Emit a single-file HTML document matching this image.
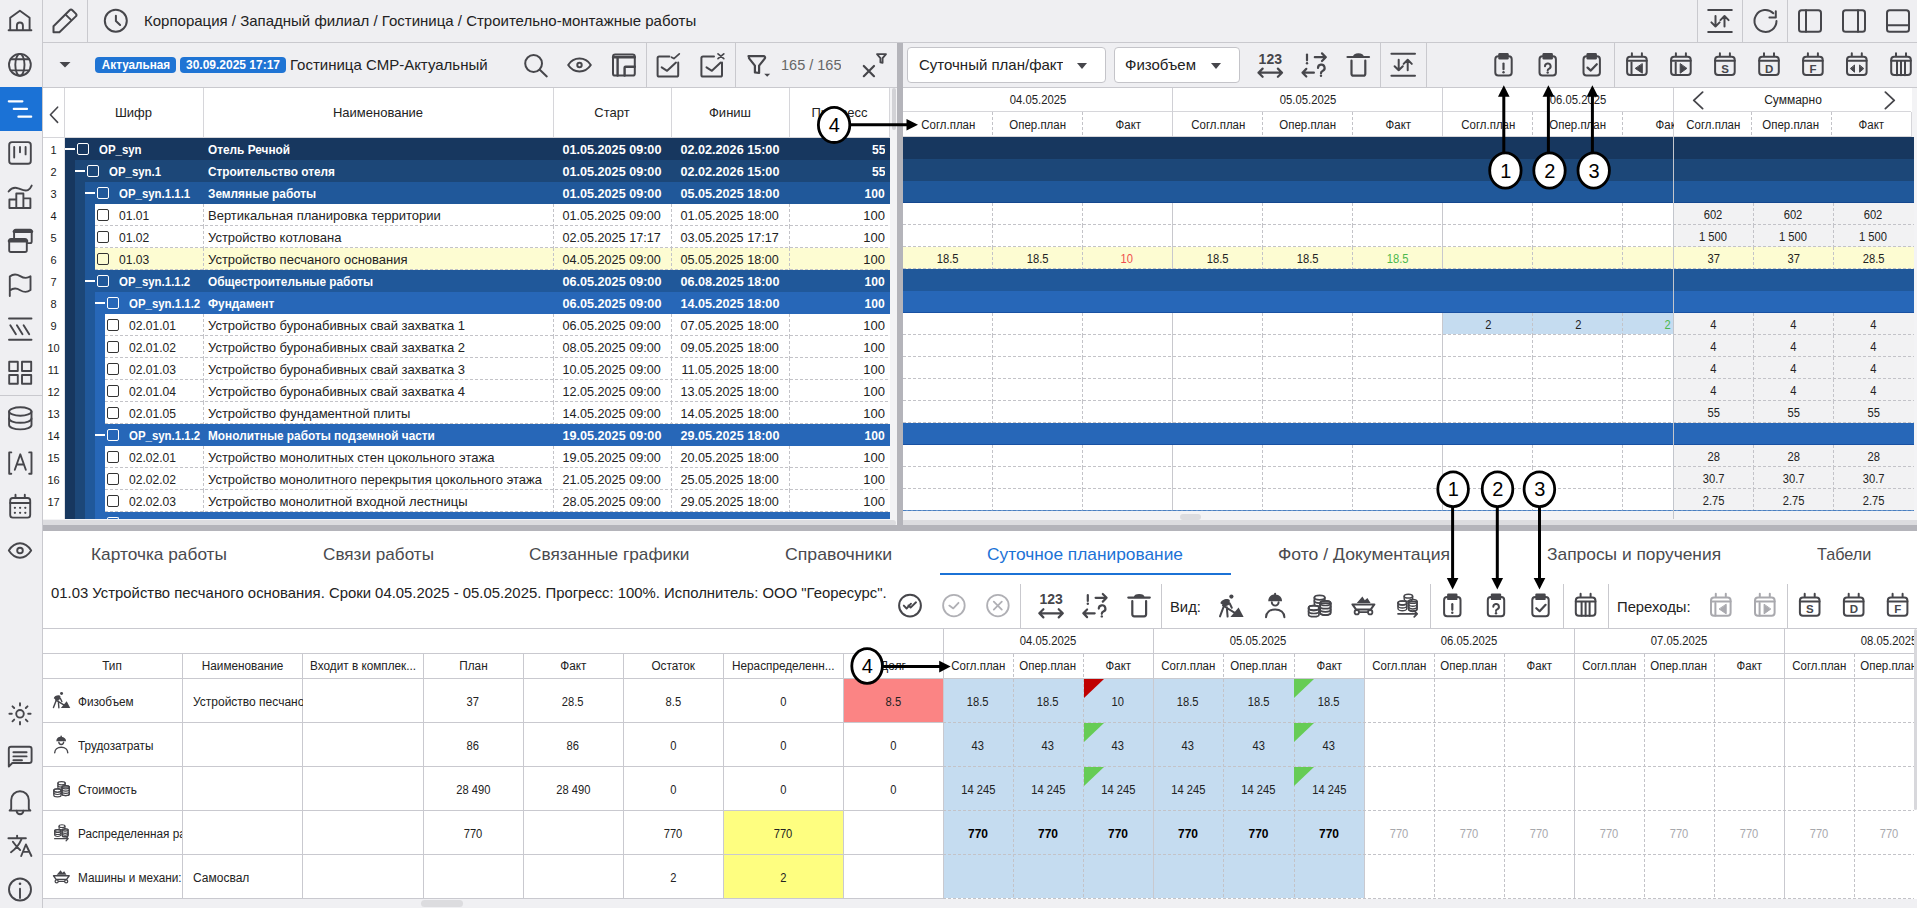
<!DOCTYPE html><html><head><meta charset="utf-8"><style>
html,body{margin:0;padding:0;}
body{width:1917px;height:908px;position:relative;overflow:hidden;background:#fff;font-family:"Liberation Sans",sans-serif;}
body>div, body>svg{position:absolute;}
.t{position:absolute;white-space:nowrap;overflow:hidden;}
</style></head><body>
<div style="left:0px;top:0px;width:42px;height:908px;background:#efeff2"></div>
<div style="left:42px;top:0px;width:1px;height:908px;background:#c9c9ce"></div>
<div style="left:0px;top:87px;width:42px;height:44px;background:#1b72d6"></div>
<div style="left:0px;top:395px;width:42px;height:1px;background:#c9c9ce"></div>
<svg style="position:absolute;left:0px;top:0px" width="42" height="908" viewBox="0 0 42 908" fill="none" stroke="#46464b" stroke-width="1.9" stroke-linecap="round" stroke-linejoin="round"><path d="M8.6 30.3H31.4M10.2 30.3V17.8L19.9 10.8 29.6 17.8V30.3M16.9 30.3v-4.8a3 3 0 0 1 6 0v4.8"/><circle cx="19.9" cy="64.8" r="10.9"/><ellipse cx="19.9" cy="64.8" rx="4.6" ry="10.9"/><path d="M10.6 59.2h18.6M10.6 70.4h18.6"/><rect x="9.2" y="142.1" width="21.6" height="21.6" rx="2.8"/><path d="M14.2 147v10.5M20 147v5.3M25.6 147v7.4"/><path d="M8.6 191.5c2.5-3.2 5.8-4.5 9.5-3.2s6.5 3.2 9.8 1.8c1.6-.7 2.8-2.2 3.8-4.5"/><path d="M9.4 208V199.5h6.9V208M16.3 208V193.5h7.1V208M23.4 208V198.4h7V208H9.4"/><path d="M14.1 237.8V231.2a1.6 1.6 0 0 1 1.6-1.6h14.4a1.6 1.6 0 0 1 1.6 1.6v10.3a1.6 1.6 0 0 1-1.6 1.6h-3.2"/><path d="M14.1 231.6h17.6" stroke-width="3"/><rect x="9.2" y="239" width="17.6" height="13" rx="1.8"/><path d="M9.2 241h17.6" stroke-width="3"/><path d="M9.8 296V276.5c3.2-2.6 6.8-2.6 10.4-.4s7.2 2.4 10.3.2V290c-3.1 2.4-6.7 2.4-10.3.2s-7.2-2.2-10.4.4"/><path d="M9 318.5h22.5M9 339.8h22.5M10.3 325.3l5.6 9M16.9 325.3l5.6 9M23.6 325.3l5.6 9"/><rect x="9.2" y="361.8" width="8.6" height="9.2"/><rect x="22" y="361.8" width="9.2" height="9.2"/><rect x="9.2" y="375" width="8.6" height="8.8"/><rect x="22" y="375" width="9.2" height="8.8"/><ellipse cx="20.3" cy="411.5" rx="11.2" ry="4.2"/><path d="M9.1 411.5v13.6c0 2.4 5 4.3 11.2 4.3s11.2-1.9 11.2-4.3V411.5"/><path d="M9.1 418.5c0 2.4 5 4.3 11.2 4.3s11.2-1.9 11.2-4.3"/><path d="M11.3 452.4H9.2v21.3h2.1M29.2 452.4h2.3v21.3h-2.3"/><path d="M14.8 469.8l5.5-15.5 5.5 15.5M16.8 464.5h7"/><rect x="10.2" y="498" width="20" height="19.6" rx="2.6"/><path d="M10.2 503h20M15.5 494.8v3.2M24.8 494.8v3.2"/><path d="M14.9 507.8h.01M20.1 507.8h.01M25.3 507.8h.01M14.9 512.8h.01M20.1 512.8h.01M25.3 512.8h.01" stroke-width="2.3"/><path d="M8.8 550.5c3-4.6 6.8-7.2 11.2-7.2s8.2 2.6 11.2 7.2c-3 4.6-6.8 7.2-11.2 7.2s-8.2-2.6-11.2-7.2z"/><circle cx="20" cy="550.5" r="2.8"/><circle cx="20" cy="713.8" r="3.8"/><path d="M20 703.2v2.4M20 722v2.4M9.4 713.8h2.4M28.2 713.8h2.4M12.5 706.3l1.7 1.7M25.8 719.6l1.7 1.7M12.5 721.3l1.7-1.7M25.8 708l1.7-1.7"/><path d="M8.8 764.5V749a2.2 2.2 0 0 1 2.2-2.2h18.4a2.2 2.2 0 0 1 2.2 2.2v11.8a2.2 2.2 0 0 1-2.2 2.2H12.3l-3.5 3.6z"/><path d="M13.4 752.3h13.2M13.4 756.4h13.2M13.4 760.3h8.6"/><path d="M11.2 808.8V800a8.8 8.8 0 0 1 17.6 0v8.8l1.6 1.8H9.6z"/><path d="M16.6 810.8a3.4 3.4 0 0 0 6.8 0"/><path d="M8.4 838.2h17.5M17.1 835.6v2.6M21.4 839.4c-2.2 5-5.4 9.4-10.4 12.8M12.9 841.7c2.4 3.4 4.6 6 7.2 8.3"/><path d="M21.2 856l4.7-11.5 5.5 11.5M23.2 851.9h6"/><circle cx="20" cy="889.5" r="11"/><path d="M20 888.8v9.2"/><path d="M20 883.8h.01" stroke-width="2.6"/></svg>
<svg style="position:absolute;left:0px;top:0px" width="42" height="908" viewBox="0 0 42 908" fill="none" stroke="#ffffff" stroke-width="2.2" stroke-linecap="round" stroke-linejoin="round"><path d="M8.8 101.3h13.6M13.8 108.9h13.2M18.4 116.7h12.8"/></svg>
<div style="left:43px;top:0px;width:1874px;height:42px;background:#efeff2"></div>
<div style="left:43px;top:42px;width:1874px;height:1px;background:#c9c9ce"></div>
<div style="left:87px;top:0px;width:1px;height:42px;background:#c9c9ce"></div>
<div class="t" style="left:144px;top:11px;height:20px;line-height:20px;font-size:15px;color:#222">Корпорация / Западный филиал / Гостиница / Строительно-монтажные работы</div>
<div style="left:1697px;top:0px;width:1px;height:42px;background:#c9c9ce"></div>
<div style="left:1742px;top:0px;width:1px;height:42px;background:#c9c9ce"></div>
<div style="left:1787px;top:0px;width:1px;height:42px;background:#c9c9ce"></div>
<div style="left:43px;top:43px;width:1874px;height:44px;background:#efeff2"></div>
<div style="left:43px;top:87px;width:1874px;height:1px;background:#c9c9ce"></div>
<div class="t" style="left:95px;top:57px;width:81px;height:16px;line-height:16px;text-align:center;background:#1f74d4;color:#fff;font-size:12px;font-weight:bold;border-radius:4px;text-align:center"><span style="display:inline-block;transform:scaleX(0.976);transform-origin:center">Актуальная</span></div>
<div class="t" style="left:180px;top:57px;width:106px;height:16px;line-height:16px;text-align:center;background:#1f74d4;color:#fff;font-size:12px;font-weight:bold;border-radius:4px;text-align:center">30.09.2025 17:17</div>
<div class="t" style="left:290px;top:55px;height:20px;line-height:20px;font-size:15px;color:#222">Гостиница СМР-Актуальный</div>
<div style="left:646px;top:43px;width:1px;height:44px;background:#c9c9ce"></div>
<div style="left:735px;top:43px;width:1px;height:44px;background:#c9c9ce"></div>
<div class="t" style="left:781px;top:55px;height:20px;line-height:20px;font-size:14.5px;color:#666">165 / 165</div>
<div style="left:897px;top:43px;width:6px;height:482px;background:#b4b4ba"></div>
<div class="t" style="left:907px;top:47px;width:199px;height:36px;line-height:36px;background:#fff;border:1px solid #c4c4c9;border-radius:4px;box-sizing:border-box"></div>
<div class="t" style="left:919px;top:55px;height:20px;line-height:20px;font-size:15px;color:#222">Суточный план/факт</div>
<div class="t" style="left:1114px;top:47px;width:126px;height:36px;line-height:36px;background:#fff;border:1px solid #c4c4c9;border-radius:4px;box-sizing:border-box"></div>
<div class="t" style="left:1125px;top:55px;height:20px;line-height:20px;font-size:15px;color:#222">Физобъем</div>
<div style="left:1380px;top:43px;width:1px;height:44px;background:#c9c9ce"></div>
<div style="left:1426px;top:43px;width:1px;height:44px;background:#c9c9ce"></div>
<div style="left:1614px;top:43px;width:1px;height:44px;background:#c9c9ce"></div>
<svg style="position:absolute;left:1076.5px;top:62.5px" width="10" height="6" viewBox="0 0 10 6"><path d="M0 0h10L5 6z" fill="#46464b"/></svg>
<svg style="position:absolute;left:1211px;top:62.5px" width="10" height="6" viewBox="0 0 10 6"><path d="M0 0h10L5 6z" fill="#46464b"/></svg>
<svg style="position:absolute;left:0;top:0" width="1917" height="88" viewBox="0 0 1917 88" fill="none" stroke="#46464b" stroke-width="2" stroke-linecap="round" stroke-linejoin="round"><path d="M53.5 32.2V26.3L69.6 10.2a2 2 0 0 1 2.8 0l3.4 3.4a2 2 0 0 1 0 2.8L59.4 32.2z"/><path d="M65.6 14.6l5.2 5"/><circle cx="115.8" cy="20.7" r="11"/><path d="M115.9 15.8V21l4.2 4"/><path d="M1708.2 10h23.6M1708.2 32h23.6"/><path d="M1715.5 16v10.5M1711.4 22.4l4.1 4.1 4.1-4.1M1724.5 26.5V16M1720.4 20.1l4.1-4.1 4.1 4.1"/><path d="M1776.5 21a11 11 0 1 1-3.2-7.8"/><path d="M1775.8 11.2v6.4h-6.4"/><rect x="1799" y="10.3" width="22" height="21.5" rx="2.6"/><path d="M1806 10.3v21.5"/><rect x="1843" y="10.3" width="22" height="21.5" rx="2.6"/><path d="M1858 10.3v21.5"/><rect x="1887" y="10.3" width="22" height="21.5" rx="2.6"/><path d="M1887 25.3h22"/><path d="M59.5 62h11l-5.5 5.5z" fill="#46464b" stroke="none"/><circle cx="533.6" cy="63.5" r="8.4"/><path d="M539.8 69.8l7 6.6"/><path d="M568.2 65c2.8-4.3 6.6-6.4 11.3-6.4s8.5 2.1 11.3 6.4c-2.8 4.3-6.6 6.4-11.3 6.4s-8.5-2.1-11.3-6.4z"/><circle cx="579.5" cy="65" r="2.2"/><rect x="613" y="54.6" width="21.8" height="21" rx="2.2"/><path d="M613 57.2h21.8M617.6 57.2v18.4" stroke-width="2.4"/><path d="M624.6 75.6v-7.8a1 1 0 0 1 1-1h9.2" stroke-width="2.4"/><path d="M678.2 62.5v12.4a1.6 1.6 0 0 1-1.6 1.6h-17.4a1.6 1.6 0 0 1-1.6-1.6V58.1a1.6 1.6 0 0 1 1.6-1.6h10.2"/><path d="M661.7 67.4l5.4 3.4 8.9-8.2"/><path d="M671.5 57.2l2.4 1.4 5.4-4.8" stroke-width="1.7"/><path d="M722 62.5v12.4a1.6 1.6 0 0 1-1.6 1.6h-17.4a1.6 1.6 0 0 1-1.6-1.6V58.1a1.6 1.6 0 0 1 1.6-1.6h11"/><path d="M706.5 67.4l5.4 3.4 8.8-8.2"/><path d="M718 53.8l5.8 4.8M723.8 53.8l-5.8 4.8" stroke-width="1.7"/><path d="M748.5 56.2h15c1.4 0 2 1.4 1.2 2.4l-5.6 7v7.4l-4.2 -0.6v-6.8l-5.6-7c-.8-1 -.2-2.4 1.2-2.4z" stroke-width="2.2"/><path d="M764.2 73.8h6l-3 3z" fill="#46464b" stroke="none"/><path d="M863.8 66l10.2 10.2M874 66l-10.2 10.2" stroke-width="2.2"/><path d="M877 54.2h9l-3.4 4v4.6l-2.2-.4v-4.2z" stroke-width="1.8"/><text x="1270.3" y="63.8" text-anchor="middle" font-family="Liberation Sans" font-weight="bold" font-size="14" fill="#46464b" stroke="none">123</text><path d="M1258.5 72.7h23.5M1262.6 68.6l-4.1 4.1 4.1 4.1M1277.9 68.6l4.1 4.1-4.1 4.1" stroke-width="2.2"/><path d="M1307 54.5v5.8" stroke-width="2.2"/><path d="M1307 63.2h.01" stroke-width="2.4"/><path d="M1314.8 57.2h11M1322 53.4l3.8 3.8-3.8 3.8M1302.5 72.7h11.4M1306.3 68.9l-3.8 3.8 3.8 3.8" stroke-width="2.2"/><path d="M1318 68a3.3 3.3 0 1 1 4.6 3c-1 .5-1.6 1-1.6 2.2" stroke-width="2.2"/><path d="M1321 75.8h.01" stroke-width="2.4"/><path d="M1347.5 57h21.5" stroke-width="2.2"/><path d="M1353 57c0-2.6 2.2-3.7 5.4-3.7s5.4 1.1 5.4 3.7z" fill="#46464b" stroke="none"/><path d="M1351.5 60.5v13.2a2 2 0 0 0 2 2h9.8a2 2 0 0 0 2-2V60.5" stroke-width="2.2"/><path d="M1391.4 53.8h23.6M1391.4 75.8h23.6"/><path d="M1398.7 59.8v10.5M1394.6000000000001 66.2l4.1 4.1 4.1-4.1M1407.7 70.3V59.8M1403.6000000000001 63.9l4.1-4.1 4.1 4.1"/><rect x="1495.3" y="56.3" width="16.4" height="19.3" rx="3"/><rect x="1498.3" y="53" width="10.4" height="6.5" rx="1.2" fill="#46464b" stroke="none"/><path d="M1503.5 63.6v5.6" stroke-width="2.2"/><path d="M1503.5 72.2h.01" stroke-width="2.4"/><rect x="1539.5" y="56.3" width="16.4" height="19.3" rx="3"/><rect x="1542.5" y="53" width="10.4" height="6.5" rx="1.2" fill="#46464b" stroke="none"/><path d="M1545 66.2a2.8 2.8 0 1 1 3.9 2.6c-.8.4-1.2.9-1.2 1.7" stroke-width="2"/><path d="M1547.7 72.6h.01" stroke-width="2.4"/><rect x="1583.5" y="56.3" width="16.4" height="19.3" rx="3"/><rect x="1586.5" y="53" width="10.4" height="6.5" rx="1.2" fill="#46464b" stroke="none"/><path d="M1587.5 67.6l3.3 3 6-6.4" stroke-width="2.2"/><rect x="1627.1000000000001" y="56.8" width="19.6" height="18.299999999999997" rx="3"/><path d="M1627.1000000000001 60.8h19.6M1631.9 53.199999999999996v2.6M1641.9 53.199999999999996v2.6"/><path d="M1631.5 62.4v12.4"/><path d="M1642.3000000000002 64.0v9.2l-6.8-4.6z" fill="#46464b" stroke-width="1"/><rect x="1671.1000000000001" y="56.8" width="19.6" height="18.299999999999997" rx="3"/><path d="M1671.1000000000001 60.8h19.6M1675.9 53.199999999999996v2.6M1685.9 53.199999999999996v2.6"/><path d="M1675.7 62.4v12.4"/><path d="M1680.2 64.0v9.2l6.4-4.6z" fill="#46464b" stroke-width="1"/><rect x="1715.1000000000001" y="56.8" width="19.6" height="18.299999999999997" rx="3"/><path d="M1715.1000000000001 60.8h19.6M1719.9 53.199999999999996v2.6M1729.9 53.199999999999996v2.6"/><text x="1725.1000000000001" y="72.8" text-anchor="middle" font-family="Liberation Sans" font-weight="bold" font-size="11.5" fill="#46464b" stroke="none">S</text><rect x="1759.2" y="56.8" width="19.6" height="18.299999999999997" rx="3"/><path d="M1759.2 60.8h19.6M1764 53.199999999999996v2.6M1774 53.199999999999996v2.6"/><text x="1769.2" y="72.8" text-anchor="middle" font-family="Liberation Sans" font-weight="bold" font-size="11.5" fill="#46464b" stroke="none">D</text><rect x="1803.1000000000001" y="56.8" width="19.6" height="18.299999999999997" rx="3"/><path d="M1803.1000000000001 60.8h19.6M1807.9 53.199999999999996v2.6M1817.9 53.199999999999996v2.6"/><text x="1813.1000000000001" y="72.8" text-anchor="middle" font-family="Liberation Sans" font-weight="bold" font-size="11.5" fill="#46464b" stroke="none">F</text><rect x="1847.0" y="56.8" width="19.6" height="18.299999999999997" rx="3"/><path d="M1847.0 60.8h19.6M1851.8 53.199999999999996v2.6M1861.8 53.199999999999996v2.6"/><path d="M1854.5 65.39999999999999v6.8l-3.9-3.4z" fill="#46464b" stroke-width="1"/><path d="M1859.6 65.39999999999999v6.8l3.9-3.4z" fill="#46464b" stroke-width="1"/><rect x="1891.2" y="56.8" width="19.6" height="18.299999999999997" rx="3"/><path d="M1891.2 60.8h19.6M1896 53.199999999999996v2.6M1906 53.199999999999996v2.6"/><path d="M1897 61.4v13.8M1901 61.4v13.8M1905 61.4v13.8"/></svg>
<div style="left:43px;top:88px;width:854px;height:431px;background:#fff"></div>
<svg style="position:absolute;left:43px;top:100px" width="20" height="28" viewBox="43 100 20 28" fill="none" stroke="#46464b" stroke-width="1.6" stroke-linecap="round" stroke-linejoin="round"><path d="M57.6 107.2l-7.2 7.6 7.2 7.6"/></svg>
<div style="left:64px;top:88px;width:1px;height:50px;background:#d6d6da"></div>
<div style="left:203px;top:88px;width:1px;height:50px;background:#d6d6da"></div>
<div style="left:553px;top:88px;width:1px;height:50px;background:#d6d6da"></div>
<div style="left:671px;top:88px;width:1px;height:50px;background:#d6d6da"></div>
<div style="left:789px;top:88px;width:1px;height:50px;background:#d6d6da"></div>
<div style="left:889px;top:88px;width:1px;height:50px;background:#d6d6da"></div>
<div style="left:43px;top:137px;width:847px;height:1px;background:#d6d6da"></div>
<div class="t" style="left:63.5px;top:105px;width:140px;height:16px;line-height:16px;text-align:center;font-size:13px;color:#222">Шифр</div>
<div class="t" style="left:308px;top:105px;width:140px;height:16px;line-height:16px;text-align:center;font-size:13px;color:#222">Наименование</div>
<div class="t" style="left:542px;top:105px;width:140px;height:16px;line-height:16px;text-align:center;font-size:13px;color:#222">Старт</div>
<div class="t" style="left:660px;top:105px;width:140px;height:16px;line-height:16px;text-align:center;font-size:13px;color:#222">Финиш</div>
<div class="t" style="left:769.5px;top:105px;width:140px;height:16px;line-height:16px;text-align:center;font-size:13px;color:#222">Прогресс</div>
<div style="left:890px;top:88px;width:7px;height:431px;background:#f3f3f5"></div>
<div style="left:892px;top:88px;width:4px;height:42px;background:#d2d2d6;border-radius:2px"></div>
<div style="left:903px;top:88px;width:1014px;height:431px;background:#fff"></div>
<div class="t" style="left:42px;top:139px;width:23px;height:22px;line-height:22px;text-align:center;font-size:11px;color:#1a1a1a">1</div>
<div style="left:65px;top:138px;width:825px;height:22px;background:#17375f"></div>
<div style="left:65px;top:148px;width:10px;height:2px;background:#fff"></div>
<div style="left:77px;top:143px;width:12px;height:12px;border:1px solid #fff;border-radius:2px;box-sizing:border-box"></div>
<div class="t" style="left:99px;top:139px;height:22px;line-height:22px;font-size:13px;color:#fff;font-weight:bold"><span style="display:inline-block;transform:scaleX(0.88);transform-origin:left">OP_syn</span></div>
<div class="t" style="left:208px;top:139px;height:22px;line-height:22px;font-size:13px;color:#fff;font-weight:bold"><span style="display:inline-block;transform:scaleX(0.91);transform-origin:left">Отель Речной</span></div>
<div class="t" style="left:553px;top:139px;width:118px;height:22px;line-height:22px;text-align:center;font-size:13px;color:#fff;font-weight:bold"><span style="display:inline-block;transform:scaleX(0.97);transform-origin:center">01.05.2025 09:00</span></div>
<div class="t" style="left:671px;top:139px;width:118px;height:22px;line-height:22px;text-align:center;font-size:13px;color:#fff;font-weight:bold"><span style="display:inline-block;transform:scaleX(0.97);transform-origin:center">02.02.2026 15:00</span></div>
<div class="t" style="left:789px;top:139px;width:96px;height:22px;line-height:22px;text-align:right;font-size:13px;color:#fff;font-weight:bold"><span style="display:inline-block;transform:scaleX(0.93);transform-origin:right">55</span></div>
<div class="t" style="left:42px;top:161px;width:23px;height:22px;line-height:22px;text-align:center;font-size:11px;color:#1a1a1a">2</div>
<div style="left:65px;top:160px;width:10px;height:22px;background:#17375f"></div>
<div style="left:75px;top:160px;width:815px;height:22px;background:#1c4778"></div>
<div style="left:75px;top:170px;width:10px;height:2px;background:#fff"></div>
<div style="left:87px;top:165px;width:12px;height:12px;border:1px solid #fff;border-radius:2px;box-sizing:border-box"></div>
<div class="t" style="left:109px;top:161px;height:22px;line-height:22px;font-size:13px;color:#fff;font-weight:bold"><span style="display:inline-block;transform:scaleX(0.88);transform-origin:left">OP_syn.1</span></div>
<div class="t" style="left:208px;top:161px;height:22px;line-height:22px;font-size:13px;color:#fff;font-weight:bold"><span style="display:inline-block;transform:scaleX(0.91);transform-origin:left">Строительство отеля</span></div>
<div class="t" style="left:553px;top:161px;width:118px;height:22px;line-height:22px;text-align:center;font-size:13px;color:#fff;font-weight:bold"><span style="display:inline-block;transform:scaleX(0.97);transform-origin:center">01.05.2025 09:00</span></div>
<div class="t" style="left:671px;top:161px;width:118px;height:22px;line-height:22px;text-align:center;font-size:13px;color:#fff;font-weight:bold"><span style="display:inline-block;transform:scaleX(0.97);transform-origin:center">02.02.2026 15:00</span></div>
<div class="t" style="left:789px;top:161px;width:96px;height:22px;line-height:22px;text-align:right;font-size:13px;color:#fff;font-weight:bold"><span style="display:inline-block;transform:scaleX(0.93);transform-origin:right">55</span></div>
<div class="t" style="left:42px;top:183px;width:23px;height:22px;line-height:22px;text-align:center;font-size:11px;color:#1a1a1a">3</div>
<div style="left:65px;top:182px;width:10px;height:22px;background:#17375f"></div>
<div style="left:75px;top:182px;width:10px;height:22px;background:#1c4778"></div>
<div style="left:85px;top:182px;width:805px;height:22px;background:#20589a"></div>
<div style="left:85px;top:192px;width:10px;height:2px;background:#fff"></div>
<div style="left:97px;top:187px;width:12px;height:12px;border:1px solid #fff;border-radius:2px;box-sizing:border-box"></div>
<div class="t" style="left:119px;top:183px;height:22px;line-height:22px;font-size:13px;color:#fff;font-weight:bold"><span style="display:inline-block;transform:scaleX(0.88);transform-origin:left">OP_syn.1.1.1</span></div>
<div class="t" style="left:208px;top:183px;height:22px;line-height:22px;font-size:13px;color:#fff;font-weight:bold"><span style="display:inline-block;transform:scaleX(0.91);transform-origin:left">Земляные работы</span></div>
<div class="t" style="left:553px;top:183px;width:118px;height:22px;line-height:22px;text-align:center;font-size:13px;color:#fff;font-weight:bold"><span style="display:inline-block;transform:scaleX(0.97);transform-origin:center">01.05.2025 09:00</span></div>
<div class="t" style="left:671px;top:183px;width:118px;height:22px;line-height:22px;text-align:center;font-size:13px;color:#fff;font-weight:bold"><span style="display:inline-block;transform:scaleX(0.97);transform-origin:center">05.05.2025 18:00</span></div>
<div class="t" style="left:789px;top:183px;width:96px;height:22px;line-height:22px;text-align:right;font-size:13px;color:#fff;font-weight:bold"><span style="display:inline-block;transform:scaleX(0.93);transform-origin:right">100</span></div>
<div class="t" style="left:42px;top:205px;width:23px;height:22px;line-height:22px;text-align:center;font-size:11px;color:#1a1a1a">4</div>
<div style="left:65px;top:204px;width:10px;height:22px;background:#17375f"></div>
<div style="left:75px;top:204px;width:10px;height:22px;background:#1c4778"></div>
<div style="left:85px;top:204px;width:10px;height:22px;background:#20589a"></div>
<div style="left:95px;top:204px;width:795px;height:22px;background:#fff"></div>
<div style="left:97px;top:209px;width:12px;height:12px;border:1px solid #333;border-radius:2px;box-sizing:border-box"></div>
<div class="t" style="left:119px;top:205px;height:22px;line-height:22px;font-size:13px;color:#222"><span style="display:inline-block;transform:scaleX(0.93);transform-origin:left">01.01</span></div>
<div class="t" style="left:208px;top:205px;width:343px;height:22px;line-height:22px;font-size:13px;color:#222">Вертикальная планировка территории</div>
<div class="t" style="left:553px;top:205px;width:118px;height:22px;line-height:22px;text-align:center;font-size:13px;color:#222"><span style="display:inline-block;transform:scaleX(0.97);transform-origin:center">01.05.2025 09:00</span></div>
<div class="t" style="left:671px;top:205px;width:118px;height:22px;line-height:22px;text-align:center;font-size:13px;color:#222"><span style="display:inline-block;transform:scaleX(0.97);transform-origin:center">01.05.2025 18:00</span></div>
<div class="t" style="left:789px;top:205px;width:96px;height:22px;line-height:22px;text-align:right;font-size:13px;color:#222">100</div>
<div style="left:95px;top:225px;width:795px;height:1px;background-image:linear-gradient(to right,#c3c3c8 60%,transparent 60%);background-size:5px 1px"></div>
<div style="left:203px;top:204px;width:1px;height:22px;background-image:linear-gradient(to bottom,#c3c3c8 60%,transparent 60%);background-size:1px 5px"></div>
<div style="left:553px;top:204px;width:1px;height:22px;background-image:linear-gradient(to bottom,#c3c3c8 60%,transparent 60%);background-size:1px 5px"></div>
<div style="left:671px;top:204px;width:1px;height:22px;background-image:linear-gradient(to bottom,#c3c3c8 60%,transparent 60%);background-size:1px 5px"></div>
<div style="left:789px;top:204px;width:1px;height:22px;background-image:linear-gradient(to bottom,#c3c3c8 60%,transparent 60%);background-size:1px 5px"></div>
<div class="t" style="left:42px;top:227px;width:23px;height:22px;line-height:22px;text-align:center;font-size:11px;color:#1a1a1a">5</div>
<div style="left:65px;top:226px;width:10px;height:22px;background:#17375f"></div>
<div style="left:75px;top:226px;width:10px;height:22px;background:#1c4778"></div>
<div style="left:85px;top:226px;width:10px;height:22px;background:#20589a"></div>
<div style="left:95px;top:226px;width:795px;height:22px;background:#fff"></div>
<div style="left:97px;top:231px;width:12px;height:12px;border:1px solid #333;border-radius:2px;box-sizing:border-box"></div>
<div class="t" style="left:119px;top:227px;height:22px;line-height:22px;font-size:13px;color:#222"><span style="display:inline-block;transform:scaleX(0.93);transform-origin:left">01.02</span></div>
<div class="t" style="left:208px;top:227px;width:343px;height:22px;line-height:22px;font-size:13px;color:#222">Устройство котлована</div>
<div class="t" style="left:553px;top:227px;width:118px;height:22px;line-height:22px;text-align:center;font-size:13px;color:#222"><span style="display:inline-block;transform:scaleX(0.97);transform-origin:center">02.05.2025 17:17</span></div>
<div class="t" style="left:671px;top:227px;width:118px;height:22px;line-height:22px;text-align:center;font-size:13px;color:#222"><span style="display:inline-block;transform:scaleX(0.97);transform-origin:center">03.05.2025 17:17</span></div>
<div class="t" style="left:789px;top:227px;width:96px;height:22px;line-height:22px;text-align:right;font-size:13px;color:#222">100</div>
<div style="left:95px;top:247px;width:795px;height:1px;background-image:linear-gradient(to right,#c3c3c8 60%,transparent 60%);background-size:5px 1px"></div>
<div style="left:203px;top:226px;width:1px;height:22px;background-image:linear-gradient(to bottom,#c3c3c8 60%,transparent 60%);background-size:1px 5px"></div>
<div style="left:553px;top:226px;width:1px;height:22px;background-image:linear-gradient(to bottom,#c3c3c8 60%,transparent 60%);background-size:1px 5px"></div>
<div style="left:671px;top:226px;width:1px;height:22px;background-image:linear-gradient(to bottom,#c3c3c8 60%,transparent 60%);background-size:1px 5px"></div>
<div style="left:789px;top:226px;width:1px;height:22px;background-image:linear-gradient(to bottom,#c3c3c8 60%,transparent 60%);background-size:1px 5px"></div>
<div class="t" style="left:42px;top:249px;width:23px;height:22px;line-height:22px;text-align:center;font-size:11px;color:#1a1a1a">6</div>
<div style="left:65px;top:248px;width:10px;height:22px;background:#17375f"></div>
<div style="left:75px;top:248px;width:10px;height:22px;background:#1c4778"></div>
<div style="left:85px;top:248px;width:10px;height:22px;background:#20589a"></div>
<div style="left:95px;top:248px;width:795px;height:22px;background:#fdfcd2"></div>
<div style="left:97px;top:253px;width:12px;height:12px;border:1px solid #333;border-radius:2px;box-sizing:border-box"></div>
<div class="t" style="left:119px;top:249px;height:22px;line-height:22px;font-size:13px;color:#222"><span style="display:inline-block;transform:scaleX(0.93);transform-origin:left">01.03</span></div>
<div class="t" style="left:208px;top:249px;width:343px;height:22px;line-height:22px;font-size:13px;color:#222">Устройство песчаного основания</div>
<div class="t" style="left:553px;top:249px;width:118px;height:22px;line-height:22px;text-align:center;font-size:13px;color:#222"><span style="display:inline-block;transform:scaleX(0.97);transform-origin:center">04.05.2025 09:00</span></div>
<div class="t" style="left:671px;top:249px;width:118px;height:22px;line-height:22px;text-align:center;font-size:13px;color:#222"><span style="display:inline-block;transform:scaleX(0.97);transform-origin:center">05.05.2025 18:00</span></div>
<div class="t" style="left:789px;top:249px;width:96px;height:22px;line-height:22px;text-align:right;font-size:13px;color:#222">100</div>
<div style="left:95px;top:269px;width:795px;height:1px;background-image:linear-gradient(to right,#c3c3c8 60%,transparent 60%);background-size:5px 1px"></div>
<div style="left:203px;top:248px;width:1px;height:22px;background-image:linear-gradient(to bottom,#c3c3c8 60%,transparent 60%);background-size:1px 5px"></div>
<div style="left:553px;top:248px;width:1px;height:22px;background-image:linear-gradient(to bottom,#c3c3c8 60%,transparent 60%);background-size:1px 5px"></div>
<div style="left:671px;top:248px;width:1px;height:22px;background-image:linear-gradient(to bottom,#c3c3c8 60%,transparent 60%);background-size:1px 5px"></div>
<div style="left:789px;top:248px;width:1px;height:22px;background-image:linear-gradient(to bottom,#c3c3c8 60%,transparent 60%);background-size:1px 5px"></div>
<div class="t" style="left:42px;top:271px;width:23px;height:22px;line-height:22px;text-align:center;font-size:11px;color:#1a1a1a">7</div>
<div style="left:65px;top:270px;width:10px;height:22px;background:#17375f"></div>
<div style="left:75px;top:270px;width:10px;height:22px;background:#1c4778"></div>
<div style="left:85px;top:270px;width:805px;height:22px;background:#20589a"></div>
<div style="left:85px;top:280px;width:10px;height:2px;background:#fff"></div>
<div style="left:97px;top:275px;width:12px;height:12px;border:1px solid #fff;border-radius:2px;box-sizing:border-box"></div>
<div class="t" style="left:119px;top:271px;height:22px;line-height:22px;font-size:13px;color:#fff;font-weight:bold"><span style="display:inline-block;transform:scaleX(0.88);transform-origin:left">OP_syn.1.1.2</span></div>
<div class="t" style="left:208px;top:271px;height:22px;line-height:22px;font-size:13px;color:#fff;font-weight:bold"><span style="display:inline-block;transform:scaleX(0.91);transform-origin:left">Общестроительные работы</span></div>
<div class="t" style="left:553px;top:271px;width:118px;height:22px;line-height:22px;text-align:center;font-size:13px;color:#fff;font-weight:bold"><span style="display:inline-block;transform:scaleX(0.97);transform-origin:center">06.05.2025 09:00</span></div>
<div class="t" style="left:671px;top:271px;width:118px;height:22px;line-height:22px;text-align:center;font-size:13px;color:#fff;font-weight:bold"><span style="display:inline-block;transform:scaleX(0.97);transform-origin:center">06.08.2025 18:00</span></div>
<div class="t" style="left:789px;top:271px;width:96px;height:22px;line-height:22px;text-align:right;font-size:13px;color:#fff;font-weight:bold"><span style="display:inline-block;transform:scaleX(0.93);transform-origin:right">100</span></div>
<div class="t" style="left:42px;top:293px;width:23px;height:22px;line-height:22px;text-align:center;font-size:11px;color:#1a1a1a">8</div>
<div style="left:65px;top:292px;width:10px;height:22px;background:#17375f"></div>
<div style="left:75px;top:292px;width:10px;height:22px;background:#1c4778"></div>
<div style="left:85px;top:292px;width:10px;height:22px;background:#20589a"></div>
<div style="left:95px;top:292px;width:795px;height:22px;background:#2767b8"></div>
<div style="left:95px;top:302px;width:10px;height:2px;background:#fff"></div>
<div style="left:107px;top:297px;width:12px;height:12px;border:1px solid #fff;border-radius:2px;box-sizing:border-box"></div>
<div class="t" style="left:129px;top:293px;height:22px;line-height:22px;font-size:13px;color:#fff;font-weight:bold"><span style="display:inline-block;transform:scaleX(0.88);transform-origin:left">OP_syn.1.1.2</span></div>
<div class="t" style="left:208px;top:293px;height:22px;line-height:22px;font-size:13px;color:#fff;font-weight:bold"><span style="display:inline-block;transform:scaleX(0.91);transform-origin:left">Фундамент</span></div>
<div class="t" style="left:553px;top:293px;width:118px;height:22px;line-height:22px;text-align:center;font-size:13px;color:#fff;font-weight:bold"><span style="display:inline-block;transform:scaleX(0.97);transform-origin:center">06.05.2025 09:00</span></div>
<div class="t" style="left:671px;top:293px;width:118px;height:22px;line-height:22px;text-align:center;font-size:13px;color:#fff;font-weight:bold"><span style="display:inline-block;transform:scaleX(0.97);transform-origin:center">14.05.2025 18:00</span></div>
<div class="t" style="left:789px;top:293px;width:96px;height:22px;line-height:22px;text-align:right;font-size:13px;color:#fff;font-weight:bold"><span style="display:inline-block;transform:scaleX(0.93);transform-origin:right">100</span></div>
<div class="t" style="left:42px;top:315px;width:23px;height:22px;line-height:22px;text-align:center;font-size:11px;color:#1a1a1a">9</div>
<div style="left:65px;top:314px;width:10px;height:22px;background:#17375f"></div>
<div style="left:75px;top:314px;width:10px;height:22px;background:#1c4778"></div>
<div style="left:85px;top:314px;width:10px;height:22px;background:#20589a"></div>
<div style="left:95px;top:314px;width:10px;height:22px;background:#2767b8"></div>
<div style="left:105px;top:314px;width:785px;height:22px;background:#fff"></div>
<div style="left:107px;top:319px;width:12px;height:12px;border:1px solid #333;border-radius:2px;box-sizing:border-box"></div>
<div class="t" style="left:129px;top:315px;height:22px;line-height:22px;font-size:13px;color:#222"><span style="display:inline-block;transform:scaleX(0.93);transform-origin:left">02.01.01</span></div>
<div class="t" style="left:208px;top:315px;width:343px;height:22px;line-height:22px;font-size:13px;color:#222">Устройство буронабивных свай захватка 1</div>
<div class="t" style="left:553px;top:315px;width:118px;height:22px;line-height:22px;text-align:center;font-size:13px;color:#222"><span style="display:inline-block;transform:scaleX(0.97);transform-origin:center">06.05.2025 09:00</span></div>
<div class="t" style="left:671px;top:315px;width:118px;height:22px;line-height:22px;text-align:center;font-size:13px;color:#222"><span style="display:inline-block;transform:scaleX(0.97);transform-origin:center">07.05.2025 18:00</span></div>
<div class="t" style="left:789px;top:315px;width:96px;height:22px;line-height:22px;text-align:right;font-size:13px;color:#222">100</div>
<div style="left:105px;top:335px;width:785px;height:1px;background-image:linear-gradient(to right,#c3c3c8 60%,transparent 60%);background-size:5px 1px"></div>
<div style="left:203px;top:314px;width:1px;height:22px;background-image:linear-gradient(to bottom,#c3c3c8 60%,transparent 60%);background-size:1px 5px"></div>
<div style="left:553px;top:314px;width:1px;height:22px;background-image:linear-gradient(to bottom,#c3c3c8 60%,transparent 60%);background-size:1px 5px"></div>
<div style="left:671px;top:314px;width:1px;height:22px;background-image:linear-gradient(to bottom,#c3c3c8 60%,transparent 60%);background-size:1px 5px"></div>
<div style="left:789px;top:314px;width:1px;height:22px;background-image:linear-gradient(to bottom,#c3c3c8 60%,transparent 60%);background-size:1px 5px"></div>
<div class="t" style="left:42px;top:337px;width:23px;height:22px;line-height:22px;text-align:center;font-size:11px;color:#1a1a1a">10</div>
<div style="left:65px;top:336px;width:10px;height:22px;background:#17375f"></div>
<div style="left:75px;top:336px;width:10px;height:22px;background:#1c4778"></div>
<div style="left:85px;top:336px;width:10px;height:22px;background:#20589a"></div>
<div style="left:95px;top:336px;width:10px;height:22px;background:#2767b8"></div>
<div style="left:105px;top:336px;width:785px;height:22px;background:#fff"></div>
<div style="left:107px;top:341px;width:12px;height:12px;border:1px solid #333;border-radius:2px;box-sizing:border-box"></div>
<div class="t" style="left:129px;top:337px;height:22px;line-height:22px;font-size:13px;color:#222"><span style="display:inline-block;transform:scaleX(0.93);transform-origin:left">02.01.02</span></div>
<div class="t" style="left:208px;top:337px;width:343px;height:22px;line-height:22px;font-size:13px;color:#222">Устройство буронабивных свай захватка 2</div>
<div class="t" style="left:553px;top:337px;width:118px;height:22px;line-height:22px;text-align:center;font-size:13px;color:#222"><span style="display:inline-block;transform:scaleX(0.97);transform-origin:center">08.05.2025 09:00</span></div>
<div class="t" style="left:671px;top:337px;width:118px;height:22px;line-height:22px;text-align:center;font-size:13px;color:#222"><span style="display:inline-block;transform:scaleX(0.97);transform-origin:center">09.05.2025 18:00</span></div>
<div class="t" style="left:789px;top:337px;width:96px;height:22px;line-height:22px;text-align:right;font-size:13px;color:#222">100</div>
<div style="left:105px;top:357px;width:785px;height:1px;background-image:linear-gradient(to right,#c3c3c8 60%,transparent 60%);background-size:5px 1px"></div>
<div style="left:203px;top:336px;width:1px;height:22px;background-image:linear-gradient(to bottom,#c3c3c8 60%,transparent 60%);background-size:1px 5px"></div>
<div style="left:553px;top:336px;width:1px;height:22px;background-image:linear-gradient(to bottom,#c3c3c8 60%,transparent 60%);background-size:1px 5px"></div>
<div style="left:671px;top:336px;width:1px;height:22px;background-image:linear-gradient(to bottom,#c3c3c8 60%,transparent 60%);background-size:1px 5px"></div>
<div style="left:789px;top:336px;width:1px;height:22px;background-image:linear-gradient(to bottom,#c3c3c8 60%,transparent 60%);background-size:1px 5px"></div>
<div class="t" style="left:42px;top:359px;width:23px;height:22px;line-height:22px;text-align:center;font-size:11px;color:#1a1a1a">11</div>
<div style="left:65px;top:358px;width:10px;height:22px;background:#17375f"></div>
<div style="left:75px;top:358px;width:10px;height:22px;background:#1c4778"></div>
<div style="left:85px;top:358px;width:10px;height:22px;background:#20589a"></div>
<div style="left:95px;top:358px;width:10px;height:22px;background:#2767b8"></div>
<div style="left:105px;top:358px;width:785px;height:22px;background:#fff"></div>
<div style="left:107px;top:363px;width:12px;height:12px;border:1px solid #333;border-radius:2px;box-sizing:border-box"></div>
<div class="t" style="left:129px;top:359px;height:22px;line-height:22px;font-size:13px;color:#222"><span style="display:inline-block;transform:scaleX(0.93);transform-origin:left">02.01.03</span></div>
<div class="t" style="left:208px;top:359px;width:343px;height:22px;line-height:22px;font-size:13px;color:#222">Устройство буронабивных свай захватка 3</div>
<div class="t" style="left:553px;top:359px;width:118px;height:22px;line-height:22px;text-align:center;font-size:13px;color:#222"><span style="display:inline-block;transform:scaleX(0.97);transform-origin:center">10.05.2025 09:00</span></div>
<div class="t" style="left:671px;top:359px;width:118px;height:22px;line-height:22px;text-align:center;font-size:13px;color:#222"><span style="display:inline-block;transform:scaleX(0.97);transform-origin:center">11.05.2025 18:00</span></div>
<div class="t" style="left:789px;top:359px;width:96px;height:22px;line-height:22px;text-align:right;font-size:13px;color:#222">100</div>
<div style="left:105px;top:379px;width:785px;height:1px;background-image:linear-gradient(to right,#c3c3c8 60%,transparent 60%);background-size:5px 1px"></div>
<div style="left:203px;top:358px;width:1px;height:22px;background-image:linear-gradient(to bottom,#c3c3c8 60%,transparent 60%);background-size:1px 5px"></div>
<div style="left:553px;top:358px;width:1px;height:22px;background-image:linear-gradient(to bottom,#c3c3c8 60%,transparent 60%);background-size:1px 5px"></div>
<div style="left:671px;top:358px;width:1px;height:22px;background-image:linear-gradient(to bottom,#c3c3c8 60%,transparent 60%);background-size:1px 5px"></div>
<div style="left:789px;top:358px;width:1px;height:22px;background-image:linear-gradient(to bottom,#c3c3c8 60%,transparent 60%);background-size:1px 5px"></div>
<div class="t" style="left:42px;top:381px;width:23px;height:22px;line-height:22px;text-align:center;font-size:11px;color:#1a1a1a">12</div>
<div style="left:65px;top:380px;width:10px;height:22px;background:#17375f"></div>
<div style="left:75px;top:380px;width:10px;height:22px;background:#1c4778"></div>
<div style="left:85px;top:380px;width:10px;height:22px;background:#20589a"></div>
<div style="left:95px;top:380px;width:10px;height:22px;background:#2767b8"></div>
<div style="left:105px;top:380px;width:785px;height:22px;background:#fff"></div>
<div style="left:107px;top:385px;width:12px;height:12px;border:1px solid #333;border-radius:2px;box-sizing:border-box"></div>
<div class="t" style="left:129px;top:381px;height:22px;line-height:22px;font-size:13px;color:#222"><span style="display:inline-block;transform:scaleX(0.93);transform-origin:left">02.01.04</span></div>
<div class="t" style="left:208px;top:381px;width:343px;height:22px;line-height:22px;font-size:13px;color:#222">Устройство буронабивных свай захватка 4</div>
<div class="t" style="left:553px;top:381px;width:118px;height:22px;line-height:22px;text-align:center;font-size:13px;color:#222"><span style="display:inline-block;transform:scaleX(0.97);transform-origin:center">12.05.2025 09:00</span></div>
<div class="t" style="left:671px;top:381px;width:118px;height:22px;line-height:22px;text-align:center;font-size:13px;color:#222"><span style="display:inline-block;transform:scaleX(0.97);transform-origin:center">13.05.2025 18:00</span></div>
<div class="t" style="left:789px;top:381px;width:96px;height:22px;line-height:22px;text-align:right;font-size:13px;color:#222">100</div>
<div style="left:105px;top:401px;width:785px;height:1px;background-image:linear-gradient(to right,#c3c3c8 60%,transparent 60%);background-size:5px 1px"></div>
<div style="left:203px;top:380px;width:1px;height:22px;background-image:linear-gradient(to bottom,#c3c3c8 60%,transparent 60%);background-size:1px 5px"></div>
<div style="left:553px;top:380px;width:1px;height:22px;background-image:linear-gradient(to bottom,#c3c3c8 60%,transparent 60%);background-size:1px 5px"></div>
<div style="left:671px;top:380px;width:1px;height:22px;background-image:linear-gradient(to bottom,#c3c3c8 60%,transparent 60%);background-size:1px 5px"></div>
<div style="left:789px;top:380px;width:1px;height:22px;background-image:linear-gradient(to bottom,#c3c3c8 60%,transparent 60%);background-size:1px 5px"></div>
<div class="t" style="left:42px;top:403px;width:23px;height:22px;line-height:22px;text-align:center;font-size:11px;color:#1a1a1a">13</div>
<div style="left:65px;top:402px;width:10px;height:22px;background:#17375f"></div>
<div style="left:75px;top:402px;width:10px;height:22px;background:#1c4778"></div>
<div style="left:85px;top:402px;width:10px;height:22px;background:#20589a"></div>
<div style="left:95px;top:402px;width:10px;height:22px;background:#2767b8"></div>
<div style="left:105px;top:402px;width:785px;height:22px;background:#fff"></div>
<div style="left:107px;top:407px;width:12px;height:12px;border:1px solid #333;border-radius:2px;box-sizing:border-box"></div>
<div class="t" style="left:129px;top:403px;height:22px;line-height:22px;font-size:13px;color:#222"><span style="display:inline-block;transform:scaleX(0.93);transform-origin:left">02.01.05</span></div>
<div class="t" style="left:208px;top:403px;width:343px;height:22px;line-height:22px;font-size:13px;color:#222">Устройство фундаментной плиты</div>
<div class="t" style="left:553px;top:403px;width:118px;height:22px;line-height:22px;text-align:center;font-size:13px;color:#222"><span style="display:inline-block;transform:scaleX(0.97);transform-origin:center">14.05.2025 09:00</span></div>
<div class="t" style="left:671px;top:403px;width:118px;height:22px;line-height:22px;text-align:center;font-size:13px;color:#222"><span style="display:inline-block;transform:scaleX(0.97);transform-origin:center">14.05.2025 18:00</span></div>
<div class="t" style="left:789px;top:403px;width:96px;height:22px;line-height:22px;text-align:right;font-size:13px;color:#222">100</div>
<div style="left:105px;top:423px;width:785px;height:1px;background-image:linear-gradient(to right,#c3c3c8 60%,transparent 60%);background-size:5px 1px"></div>
<div style="left:203px;top:402px;width:1px;height:22px;background-image:linear-gradient(to bottom,#c3c3c8 60%,transparent 60%);background-size:1px 5px"></div>
<div style="left:553px;top:402px;width:1px;height:22px;background-image:linear-gradient(to bottom,#c3c3c8 60%,transparent 60%);background-size:1px 5px"></div>
<div style="left:671px;top:402px;width:1px;height:22px;background-image:linear-gradient(to bottom,#c3c3c8 60%,transparent 60%);background-size:1px 5px"></div>
<div style="left:789px;top:402px;width:1px;height:22px;background-image:linear-gradient(to bottom,#c3c3c8 60%,transparent 60%);background-size:1px 5px"></div>
<div class="t" style="left:42px;top:425px;width:23px;height:22px;line-height:22px;text-align:center;font-size:11px;color:#1a1a1a">14</div>
<div style="left:65px;top:424px;width:10px;height:22px;background:#17375f"></div>
<div style="left:75px;top:424px;width:10px;height:22px;background:#1c4778"></div>
<div style="left:85px;top:424px;width:10px;height:22px;background:#20589a"></div>
<div style="left:95px;top:424px;width:795px;height:22px;background:#2767b8"></div>
<div style="left:95px;top:434px;width:10px;height:2px;background:#fff"></div>
<div style="left:107px;top:429px;width:12px;height:12px;border:1px solid #fff;border-radius:2px;box-sizing:border-box"></div>
<div class="t" style="left:129px;top:425px;height:22px;line-height:22px;font-size:13px;color:#fff;font-weight:bold"><span style="display:inline-block;transform:scaleX(0.88);transform-origin:left">OP_syn.1.1.2</span></div>
<div class="t" style="left:208px;top:425px;height:22px;line-height:22px;font-size:13px;color:#fff;font-weight:bold"><span style="display:inline-block;transform:scaleX(0.91);transform-origin:left">Монолитные работы подземной части</span></div>
<div class="t" style="left:553px;top:425px;width:118px;height:22px;line-height:22px;text-align:center;font-size:13px;color:#fff;font-weight:bold"><span style="display:inline-block;transform:scaleX(0.97);transform-origin:center">19.05.2025 09:00</span></div>
<div class="t" style="left:671px;top:425px;width:118px;height:22px;line-height:22px;text-align:center;font-size:13px;color:#fff;font-weight:bold"><span style="display:inline-block;transform:scaleX(0.97);transform-origin:center">29.05.2025 18:00</span></div>
<div class="t" style="left:789px;top:425px;width:96px;height:22px;line-height:22px;text-align:right;font-size:13px;color:#fff;font-weight:bold"><span style="display:inline-block;transform:scaleX(0.93);transform-origin:right">100</span></div>
<div class="t" style="left:42px;top:447px;width:23px;height:22px;line-height:22px;text-align:center;font-size:11px;color:#1a1a1a">15</div>
<div style="left:65px;top:446px;width:10px;height:22px;background:#17375f"></div>
<div style="left:75px;top:446px;width:10px;height:22px;background:#1c4778"></div>
<div style="left:85px;top:446px;width:10px;height:22px;background:#20589a"></div>
<div style="left:95px;top:446px;width:10px;height:22px;background:#2767b8"></div>
<div style="left:105px;top:446px;width:785px;height:22px;background:#fff"></div>
<div style="left:107px;top:451px;width:12px;height:12px;border:1px solid #333;border-radius:2px;box-sizing:border-box"></div>
<div class="t" style="left:129px;top:447px;height:22px;line-height:22px;font-size:13px;color:#222"><span style="display:inline-block;transform:scaleX(0.93);transform-origin:left">02.02.01</span></div>
<div class="t" style="left:208px;top:447px;width:343px;height:22px;line-height:22px;font-size:13px;color:#222">Устройство монолитных стен цокольного этажа</div>
<div class="t" style="left:553px;top:447px;width:118px;height:22px;line-height:22px;text-align:center;font-size:13px;color:#222"><span style="display:inline-block;transform:scaleX(0.97);transform-origin:center">19.05.2025 09:00</span></div>
<div class="t" style="left:671px;top:447px;width:118px;height:22px;line-height:22px;text-align:center;font-size:13px;color:#222"><span style="display:inline-block;transform:scaleX(0.97);transform-origin:center">20.05.2025 18:00</span></div>
<div class="t" style="left:789px;top:447px;width:96px;height:22px;line-height:22px;text-align:right;font-size:13px;color:#222">100</div>
<div style="left:105px;top:467px;width:785px;height:1px;background-image:linear-gradient(to right,#c3c3c8 60%,transparent 60%);background-size:5px 1px"></div>
<div style="left:203px;top:446px;width:1px;height:22px;background-image:linear-gradient(to bottom,#c3c3c8 60%,transparent 60%);background-size:1px 5px"></div>
<div style="left:553px;top:446px;width:1px;height:22px;background-image:linear-gradient(to bottom,#c3c3c8 60%,transparent 60%);background-size:1px 5px"></div>
<div style="left:671px;top:446px;width:1px;height:22px;background-image:linear-gradient(to bottom,#c3c3c8 60%,transparent 60%);background-size:1px 5px"></div>
<div style="left:789px;top:446px;width:1px;height:22px;background-image:linear-gradient(to bottom,#c3c3c8 60%,transparent 60%);background-size:1px 5px"></div>
<div class="t" style="left:42px;top:469px;width:23px;height:22px;line-height:22px;text-align:center;font-size:11px;color:#1a1a1a">16</div>
<div style="left:65px;top:468px;width:10px;height:22px;background:#17375f"></div>
<div style="left:75px;top:468px;width:10px;height:22px;background:#1c4778"></div>
<div style="left:85px;top:468px;width:10px;height:22px;background:#20589a"></div>
<div style="left:95px;top:468px;width:10px;height:22px;background:#2767b8"></div>
<div style="left:105px;top:468px;width:785px;height:22px;background:#fff"></div>
<div style="left:107px;top:473px;width:12px;height:12px;border:1px solid #333;border-radius:2px;box-sizing:border-box"></div>
<div class="t" style="left:129px;top:469px;height:22px;line-height:22px;font-size:13px;color:#222"><span style="display:inline-block;transform:scaleX(0.93);transform-origin:left">02.02.02</span></div>
<div class="t" style="left:208px;top:469px;width:343px;height:22px;line-height:22px;font-size:13px;color:#222">Устройство монолитного перекрытия цокольного этажа</div>
<div class="t" style="left:553px;top:469px;width:118px;height:22px;line-height:22px;text-align:center;font-size:13px;color:#222"><span style="display:inline-block;transform:scaleX(0.97);transform-origin:center">21.05.2025 09:00</span></div>
<div class="t" style="left:671px;top:469px;width:118px;height:22px;line-height:22px;text-align:center;font-size:13px;color:#222"><span style="display:inline-block;transform:scaleX(0.97);transform-origin:center">25.05.2025 18:00</span></div>
<div class="t" style="left:789px;top:469px;width:96px;height:22px;line-height:22px;text-align:right;font-size:13px;color:#222">100</div>
<div style="left:105px;top:489px;width:785px;height:1px;background-image:linear-gradient(to right,#c3c3c8 60%,transparent 60%);background-size:5px 1px"></div>
<div style="left:203px;top:468px;width:1px;height:22px;background-image:linear-gradient(to bottom,#c3c3c8 60%,transparent 60%);background-size:1px 5px"></div>
<div style="left:553px;top:468px;width:1px;height:22px;background-image:linear-gradient(to bottom,#c3c3c8 60%,transparent 60%);background-size:1px 5px"></div>
<div style="left:671px;top:468px;width:1px;height:22px;background-image:linear-gradient(to bottom,#c3c3c8 60%,transparent 60%);background-size:1px 5px"></div>
<div style="left:789px;top:468px;width:1px;height:22px;background-image:linear-gradient(to bottom,#c3c3c8 60%,transparent 60%);background-size:1px 5px"></div>
<div class="t" style="left:42px;top:491px;width:23px;height:22px;line-height:22px;text-align:center;font-size:11px;color:#1a1a1a">17</div>
<div style="left:65px;top:490px;width:10px;height:22px;background:#17375f"></div>
<div style="left:75px;top:490px;width:10px;height:22px;background:#1c4778"></div>
<div style="left:85px;top:490px;width:10px;height:22px;background:#20589a"></div>
<div style="left:95px;top:490px;width:10px;height:22px;background:#2767b8"></div>
<div style="left:105px;top:490px;width:785px;height:22px;background:#fff"></div>
<div style="left:107px;top:495px;width:12px;height:12px;border:1px solid #333;border-radius:2px;box-sizing:border-box"></div>
<div class="t" style="left:129px;top:491px;height:22px;line-height:22px;font-size:13px;color:#222"><span style="display:inline-block;transform:scaleX(0.93);transform-origin:left">02.02.03</span></div>
<div class="t" style="left:208px;top:491px;width:343px;height:22px;line-height:22px;font-size:13px;color:#222">Устройство монолитной входной лестницы</div>
<div class="t" style="left:553px;top:491px;width:118px;height:22px;line-height:22px;text-align:center;font-size:13px;color:#222"><span style="display:inline-block;transform:scaleX(0.97);transform-origin:center">28.05.2025 09:00</span></div>
<div class="t" style="left:671px;top:491px;width:118px;height:22px;line-height:22px;text-align:center;font-size:13px;color:#222"><span style="display:inline-block;transform:scaleX(0.97);transform-origin:center">29.05.2025 18:00</span></div>
<div class="t" style="left:789px;top:491px;width:96px;height:22px;line-height:22px;text-align:right;font-size:13px;color:#222">100</div>
<div style="left:105px;top:511px;width:785px;height:1px;background-image:linear-gradient(to right,#c3c3c8 60%,transparent 60%);background-size:5px 1px"></div>
<div style="left:203px;top:490px;width:1px;height:22px;background-image:linear-gradient(to bottom,#c3c3c8 60%,transparent 60%);background-size:1px 5px"></div>
<div style="left:553px;top:490px;width:1px;height:22px;background-image:linear-gradient(to bottom,#c3c3c8 60%,transparent 60%);background-size:1px 5px"></div>
<div style="left:671px;top:490px;width:1px;height:22px;background-image:linear-gradient(to bottom,#c3c3c8 60%,transparent 60%);background-size:1px 5px"></div>
<div style="left:789px;top:490px;width:1px;height:22px;background-image:linear-gradient(to bottom,#c3c3c8 60%,transparent 60%);background-size:1px 5px"></div>
<div style="left:65px;top:512px;width:10px;height:7px;background:#17375f"></div>
<div style="left:75px;top:512px;width:10px;height:7px;background:#1c4778"></div>
<div style="left:85px;top:512px;width:10px;height:7px;background:#20589a"></div>
<div style="left:95px;top:512px;width:795px;height:7px;background:#2767b8"></div>
<div style="left:903px;top:137px;width:1011px;height:22px;background:#17375f"></div>
<div style="left:903px;top:159px;width:1011px;height:22px;background:#1c4778"></div>
<div style="left:903px;top:181px;width:1011px;height:22px;background:#20589a"></div>
<div style="left:903px;top:202px;width:1011px;height:1px;background:rgba(0,40,120,0.35)"></div>
<div style="left:903px;top:203px;width:1011px;height:22px;background:#fff"></div>
<div style="left:1673px;top:203px;width:241px;height:22px;background:#f2f2f3"></div>
<div style="left:903px;top:224px;width:1011px;height:1px;background-image:linear-gradient(to right,#c3c3c8 60%,transparent 60%);background-size:5px 1px"></div>
<div style="left:1172px;top:203px;width:1px;height:22px;background:#c8c8cd"></div>
<div style="left:1442px;top:203px;width:1px;height:22px;background:#c8c8cd"></div>
<div style="left:1673px;top:203px;width:1px;height:22px;background:#c8c8cd"></div>
<div style="left:992px;top:203px;width:1px;height:22px;background-image:linear-gradient(to bottom,#c3c3c8 60%,transparent 60%);background-size:1px 5px"></div>
<div style="left:1082px;top:203px;width:1px;height:22px;background-image:linear-gradient(to bottom,#c3c3c8 60%,transparent 60%);background-size:1px 5px"></div>
<div style="left:1262px;top:203px;width:1px;height:22px;background-image:linear-gradient(to bottom,#c3c3c8 60%,transparent 60%);background-size:1px 5px"></div>
<div style="left:1352px;top:203px;width:1px;height:22px;background-image:linear-gradient(to bottom,#c3c3c8 60%,transparent 60%);background-size:1px 5px"></div>
<div style="left:1532px;top:203px;width:1px;height:22px;background-image:linear-gradient(to bottom,#c3c3c8 60%,transparent 60%);background-size:1px 5px"></div>
<div style="left:1622px;top:203px;width:1px;height:22px;background-image:linear-gradient(to bottom,#c3c3c8 60%,transparent 60%);background-size:1px 5px"></div>
<div style="left:1753px;top:203px;width:1px;height:22px;background-image:linear-gradient(to bottom,#c3c3c8 60%,transparent 60%);background-size:1px 5px"></div>
<div style="left:1833px;top:203px;width:1px;height:22px;background-image:linear-gradient(to bottom,#c3c3c8 60%,transparent 60%);background-size:1px 5px"></div>
<div style="left:903px;top:225px;width:1011px;height:22px;background:#fff"></div>
<div style="left:1673px;top:225px;width:241px;height:22px;background:#f2f2f3"></div>
<div style="left:903px;top:246px;width:1011px;height:1px;background-image:linear-gradient(to right,#c3c3c8 60%,transparent 60%);background-size:5px 1px"></div>
<div style="left:1172px;top:225px;width:1px;height:22px;background:#c8c8cd"></div>
<div style="left:1442px;top:225px;width:1px;height:22px;background:#c8c8cd"></div>
<div style="left:1673px;top:225px;width:1px;height:22px;background:#c8c8cd"></div>
<div style="left:992px;top:225px;width:1px;height:22px;background-image:linear-gradient(to bottom,#c3c3c8 60%,transparent 60%);background-size:1px 5px"></div>
<div style="left:1082px;top:225px;width:1px;height:22px;background-image:linear-gradient(to bottom,#c3c3c8 60%,transparent 60%);background-size:1px 5px"></div>
<div style="left:1262px;top:225px;width:1px;height:22px;background-image:linear-gradient(to bottom,#c3c3c8 60%,transparent 60%);background-size:1px 5px"></div>
<div style="left:1352px;top:225px;width:1px;height:22px;background-image:linear-gradient(to bottom,#c3c3c8 60%,transparent 60%);background-size:1px 5px"></div>
<div style="left:1532px;top:225px;width:1px;height:22px;background-image:linear-gradient(to bottom,#c3c3c8 60%,transparent 60%);background-size:1px 5px"></div>
<div style="left:1622px;top:225px;width:1px;height:22px;background-image:linear-gradient(to bottom,#c3c3c8 60%,transparent 60%);background-size:1px 5px"></div>
<div style="left:1753px;top:225px;width:1px;height:22px;background-image:linear-gradient(to bottom,#c3c3c8 60%,transparent 60%);background-size:1px 5px"></div>
<div style="left:1833px;top:225px;width:1px;height:22px;background-image:linear-gradient(to bottom,#c3c3c8 60%,transparent 60%);background-size:1px 5px"></div>
<div style="left:903px;top:247px;width:1011px;height:22px;background:#fdfcd2"></div>
<div style="left:903px;top:268px;width:1011px;height:1px;background-image:linear-gradient(to right,#c3c3c8 60%,transparent 60%);background-size:5px 1px"></div>
<div style="left:1172px;top:247px;width:1px;height:22px;background:#c8c8cd"></div>
<div style="left:1442px;top:247px;width:1px;height:22px;background:#c8c8cd"></div>
<div style="left:1673px;top:247px;width:1px;height:22px;background:#c8c8cd"></div>
<div style="left:992px;top:247px;width:1px;height:22px;background-image:linear-gradient(to bottom,#c3c3c8 60%,transparent 60%);background-size:1px 5px"></div>
<div style="left:1082px;top:247px;width:1px;height:22px;background-image:linear-gradient(to bottom,#c3c3c8 60%,transparent 60%);background-size:1px 5px"></div>
<div style="left:1262px;top:247px;width:1px;height:22px;background-image:linear-gradient(to bottom,#c3c3c8 60%,transparent 60%);background-size:1px 5px"></div>
<div style="left:1352px;top:247px;width:1px;height:22px;background-image:linear-gradient(to bottom,#c3c3c8 60%,transparent 60%);background-size:1px 5px"></div>
<div style="left:1532px;top:247px;width:1px;height:22px;background-image:linear-gradient(to bottom,#c3c3c8 60%,transparent 60%);background-size:1px 5px"></div>
<div style="left:1622px;top:247px;width:1px;height:22px;background-image:linear-gradient(to bottom,#c3c3c8 60%,transparent 60%);background-size:1px 5px"></div>
<div style="left:1753px;top:247px;width:1px;height:22px;background-image:linear-gradient(to bottom,#c3c3c8 60%,transparent 60%);background-size:1px 5px"></div>
<div style="left:1833px;top:247px;width:1px;height:22px;background-image:linear-gradient(to bottom,#c3c3c8 60%,transparent 60%);background-size:1px 5px"></div>
<div style="left:903px;top:269px;width:1011px;height:22px;background:#20589a"></div>
<div style="left:903px;top:291px;width:1011px;height:22px;background:#2767b8"></div>
<div style="left:903px;top:312px;width:1011px;height:1px;background:rgba(0,40,120,0.35)"></div>
<div style="left:903px;top:313px;width:1011px;height:22px;background:#fff"></div>
<div style="left:1673px;top:313px;width:241px;height:22px;background:#f2f2f3"></div>
<div style="left:903px;top:334px;width:1011px;height:1px;background-image:linear-gradient(to right,#c3c3c8 60%,transparent 60%);background-size:5px 1px"></div>
<div style="left:1172px;top:313px;width:1px;height:22px;background:#c8c8cd"></div>
<div style="left:1442px;top:313px;width:1px;height:22px;background:#c8c8cd"></div>
<div style="left:1673px;top:313px;width:1px;height:22px;background:#c8c8cd"></div>
<div style="left:992px;top:313px;width:1px;height:22px;background-image:linear-gradient(to bottom,#c3c3c8 60%,transparent 60%);background-size:1px 5px"></div>
<div style="left:1082px;top:313px;width:1px;height:22px;background-image:linear-gradient(to bottom,#c3c3c8 60%,transparent 60%);background-size:1px 5px"></div>
<div style="left:1262px;top:313px;width:1px;height:22px;background-image:linear-gradient(to bottom,#c3c3c8 60%,transparent 60%);background-size:1px 5px"></div>
<div style="left:1352px;top:313px;width:1px;height:22px;background-image:linear-gradient(to bottom,#c3c3c8 60%,transparent 60%);background-size:1px 5px"></div>
<div style="left:1532px;top:313px;width:1px;height:22px;background-image:linear-gradient(to bottom,#c3c3c8 60%,transparent 60%);background-size:1px 5px"></div>
<div style="left:1622px;top:313px;width:1px;height:22px;background-image:linear-gradient(to bottom,#c3c3c8 60%,transparent 60%);background-size:1px 5px"></div>
<div style="left:1753px;top:313px;width:1px;height:22px;background-image:linear-gradient(to bottom,#c3c3c8 60%,transparent 60%);background-size:1px 5px"></div>
<div style="left:1833px;top:313px;width:1px;height:22px;background-image:linear-gradient(to bottom,#c3c3c8 60%,transparent 60%);background-size:1px 5px"></div>
<div style="left:903px;top:335px;width:1011px;height:22px;background:#fff"></div>
<div style="left:1673px;top:335px;width:241px;height:22px;background:#f2f2f3"></div>
<div style="left:903px;top:356px;width:1011px;height:1px;background-image:linear-gradient(to right,#c3c3c8 60%,transparent 60%);background-size:5px 1px"></div>
<div style="left:1172px;top:335px;width:1px;height:22px;background:#c8c8cd"></div>
<div style="left:1442px;top:335px;width:1px;height:22px;background:#c8c8cd"></div>
<div style="left:1673px;top:335px;width:1px;height:22px;background:#c8c8cd"></div>
<div style="left:992px;top:335px;width:1px;height:22px;background-image:linear-gradient(to bottom,#c3c3c8 60%,transparent 60%);background-size:1px 5px"></div>
<div style="left:1082px;top:335px;width:1px;height:22px;background-image:linear-gradient(to bottom,#c3c3c8 60%,transparent 60%);background-size:1px 5px"></div>
<div style="left:1262px;top:335px;width:1px;height:22px;background-image:linear-gradient(to bottom,#c3c3c8 60%,transparent 60%);background-size:1px 5px"></div>
<div style="left:1352px;top:335px;width:1px;height:22px;background-image:linear-gradient(to bottom,#c3c3c8 60%,transparent 60%);background-size:1px 5px"></div>
<div style="left:1532px;top:335px;width:1px;height:22px;background-image:linear-gradient(to bottom,#c3c3c8 60%,transparent 60%);background-size:1px 5px"></div>
<div style="left:1622px;top:335px;width:1px;height:22px;background-image:linear-gradient(to bottom,#c3c3c8 60%,transparent 60%);background-size:1px 5px"></div>
<div style="left:1753px;top:335px;width:1px;height:22px;background-image:linear-gradient(to bottom,#c3c3c8 60%,transparent 60%);background-size:1px 5px"></div>
<div style="left:1833px;top:335px;width:1px;height:22px;background-image:linear-gradient(to bottom,#c3c3c8 60%,transparent 60%);background-size:1px 5px"></div>
<div style="left:903px;top:357px;width:1011px;height:22px;background:#fff"></div>
<div style="left:1673px;top:357px;width:241px;height:22px;background:#f2f2f3"></div>
<div style="left:903px;top:378px;width:1011px;height:1px;background-image:linear-gradient(to right,#c3c3c8 60%,transparent 60%);background-size:5px 1px"></div>
<div style="left:1172px;top:357px;width:1px;height:22px;background:#c8c8cd"></div>
<div style="left:1442px;top:357px;width:1px;height:22px;background:#c8c8cd"></div>
<div style="left:1673px;top:357px;width:1px;height:22px;background:#c8c8cd"></div>
<div style="left:992px;top:357px;width:1px;height:22px;background-image:linear-gradient(to bottom,#c3c3c8 60%,transparent 60%);background-size:1px 5px"></div>
<div style="left:1082px;top:357px;width:1px;height:22px;background-image:linear-gradient(to bottom,#c3c3c8 60%,transparent 60%);background-size:1px 5px"></div>
<div style="left:1262px;top:357px;width:1px;height:22px;background-image:linear-gradient(to bottom,#c3c3c8 60%,transparent 60%);background-size:1px 5px"></div>
<div style="left:1352px;top:357px;width:1px;height:22px;background-image:linear-gradient(to bottom,#c3c3c8 60%,transparent 60%);background-size:1px 5px"></div>
<div style="left:1532px;top:357px;width:1px;height:22px;background-image:linear-gradient(to bottom,#c3c3c8 60%,transparent 60%);background-size:1px 5px"></div>
<div style="left:1622px;top:357px;width:1px;height:22px;background-image:linear-gradient(to bottom,#c3c3c8 60%,transparent 60%);background-size:1px 5px"></div>
<div style="left:1753px;top:357px;width:1px;height:22px;background-image:linear-gradient(to bottom,#c3c3c8 60%,transparent 60%);background-size:1px 5px"></div>
<div style="left:1833px;top:357px;width:1px;height:22px;background-image:linear-gradient(to bottom,#c3c3c8 60%,transparent 60%);background-size:1px 5px"></div>
<div style="left:903px;top:379px;width:1011px;height:22px;background:#fff"></div>
<div style="left:1673px;top:379px;width:241px;height:22px;background:#f2f2f3"></div>
<div style="left:903px;top:400px;width:1011px;height:1px;background-image:linear-gradient(to right,#c3c3c8 60%,transparent 60%);background-size:5px 1px"></div>
<div style="left:1172px;top:379px;width:1px;height:22px;background:#c8c8cd"></div>
<div style="left:1442px;top:379px;width:1px;height:22px;background:#c8c8cd"></div>
<div style="left:1673px;top:379px;width:1px;height:22px;background:#c8c8cd"></div>
<div style="left:992px;top:379px;width:1px;height:22px;background-image:linear-gradient(to bottom,#c3c3c8 60%,transparent 60%);background-size:1px 5px"></div>
<div style="left:1082px;top:379px;width:1px;height:22px;background-image:linear-gradient(to bottom,#c3c3c8 60%,transparent 60%);background-size:1px 5px"></div>
<div style="left:1262px;top:379px;width:1px;height:22px;background-image:linear-gradient(to bottom,#c3c3c8 60%,transparent 60%);background-size:1px 5px"></div>
<div style="left:1352px;top:379px;width:1px;height:22px;background-image:linear-gradient(to bottom,#c3c3c8 60%,transparent 60%);background-size:1px 5px"></div>
<div style="left:1532px;top:379px;width:1px;height:22px;background-image:linear-gradient(to bottom,#c3c3c8 60%,transparent 60%);background-size:1px 5px"></div>
<div style="left:1622px;top:379px;width:1px;height:22px;background-image:linear-gradient(to bottom,#c3c3c8 60%,transparent 60%);background-size:1px 5px"></div>
<div style="left:1753px;top:379px;width:1px;height:22px;background-image:linear-gradient(to bottom,#c3c3c8 60%,transparent 60%);background-size:1px 5px"></div>
<div style="left:1833px;top:379px;width:1px;height:22px;background-image:linear-gradient(to bottom,#c3c3c8 60%,transparent 60%);background-size:1px 5px"></div>
<div style="left:903px;top:401px;width:1011px;height:22px;background:#fff"></div>
<div style="left:1673px;top:401px;width:241px;height:22px;background:#f2f2f3"></div>
<div style="left:903px;top:422px;width:1011px;height:1px;background-image:linear-gradient(to right,#c3c3c8 60%,transparent 60%);background-size:5px 1px"></div>
<div style="left:1172px;top:401px;width:1px;height:22px;background:#c8c8cd"></div>
<div style="left:1442px;top:401px;width:1px;height:22px;background:#c8c8cd"></div>
<div style="left:1673px;top:401px;width:1px;height:22px;background:#c8c8cd"></div>
<div style="left:992px;top:401px;width:1px;height:22px;background-image:linear-gradient(to bottom,#c3c3c8 60%,transparent 60%);background-size:1px 5px"></div>
<div style="left:1082px;top:401px;width:1px;height:22px;background-image:linear-gradient(to bottom,#c3c3c8 60%,transparent 60%);background-size:1px 5px"></div>
<div style="left:1262px;top:401px;width:1px;height:22px;background-image:linear-gradient(to bottom,#c3c3c8 60%,transparent 60%);background-size:1px 5px"></div>
<div style="left:1352px;top:401px;width:1px;height:22px;background-image:linear-gradient(to bottom,#c3c3c8 60%,transparent 60%);background-size:1px 5px"></div>
<div style="left:1532px;top:401px;width:1px;height:22px;background-image:linear-gradient(to bottom,#c3c3c8 60%,transparent 60%);background-size:1px 5px"></div>
<div style="left:1622px;top:401px;width:1px;height:22px;background-image:linear-gradient(to bottom,#c3c3c8 60%,transparent 60%);background-size:1px 5px"></div>
<div style="left:1753px;top:401px;width:1px;height:22px;background-image:linear-gradient(to bottom,#c3c3c8 60%,transparent 60%);background-size:1px 5px"></div>
<div style="left:1833px;top:401px;width:1px;height:22px;background-image:linear-gradient(to bottom,#c3c3c8 60%,transparent 60%);background-size:1px 5px"></div>
<div style="left:903px;top:423px;width:1011px;height:22px;background:#2767b8"></div>
<div style="left:903px;top:444px;width:1011px;height:1px;background:rgba(0,40,120,0.35)"></div>
<div style="left:903px;top:445px;width:1011px;height:22px;background:#fff"></div>
<div style="left:1673px;top:445px;width:241px;height:22px;background:#f2f2f3"></div>
<div style="left:903px;top:466px;width:1011px;height:1px;background-image:linear-gradient(to right,#c3c3c8 60%,transparent 60%);background-size:5px 1px"></div>
<div style="left:1172px;top:445px;width:1px;height:22px;background:#c8c8cd"></div>
<div style="left:1442px;top:445px;width:1px;height:22px;background:#c8c8cd"></div>
<div style="left:1673px;top:445px;width:1px;height:22px;background:#c8c8cd"></div>
<div style="left:992px;top:445px;width:1px;height:22px;background-image:linear-gradient(to bottom,#c3c3c8 60%,transparent 60%);background-size:1px 5px"></div>
<div style="left:1082px;top:445px;width:1px;height:22px;background-image:linear-gradient(to bottom,#c3c3c8 60%,transparent 60%);background-size:1px 5px"></div>
<div style="left:1262px;top:445px;width:1px;height:22px;background-image:linear-gradient(to bottom,#c3c3c8 60%,transparent 60%);background-size:1px 5px"></div>
<div style="left:1352px;top:445px;width:1px;height:22px;background-image:linear-gradient(to bottom,#c3c3c8 60%,transparent 60%);background-size:1px 5px"></div>
<div style="left:1532px;top:445px;width:1px;height:22px;background-image:linear-gradient(to bottom,#c3c3c8 60%,transparent 60%);background-size:1px 5px"></div>
<div style="left:1622px;top:445px;width:1px;height:22px;background-image:linear-gradient(to bottom,#c3c3c8 60%,transparent 60%);background-size:1px 5px"></div>
<div style="left:1753px;top:445px;width:1px;height:22px;background-image:linear-gradient(to bottom,#c3c3c8 60%,transparent 60%);background-size:1px 5px"></div>
<div style="left:1833px;top:445px;width:1px;height:22px;background-image:linear-gradient(to bottom,#c3c3c8 60%,transparent 60%);background-size:1px 5px"></div>
<div style="left:903px;top:467px;width:1011px;height:22px;background:#fff"></div>
<div style="left:1673px;top:467px;width:241px;height:22px;background:#f2f2f3"></div>
<div style="left:903px;top:488px;width:1011px;height:1px;background-image:linear-gradient(to right,#c3c3c8 60%,transparent 60%);background-size:5px 1px"></div>
<div style="left:1172px;top:467px;width:1px;height:22px;background:#c8c8cd"></div>
<div style="left:1442px;top:467px;width:1px;height:22px;background:#c8c8cd"></div>
<div style="left:1673px;top:467px;width:1px;height:22px;background:#c8c8cd"></div>
<div style="left:992px;top:467px;width:1px;height:22px;background-image:linear-gradient(to bottom,#c3c3c8 60%,transparent 60%);background-size:1px 5px"></div>
<div style="left:1082px;top:467px;width:1px;height:22px;background-image:linear-gradient(to bottom,#c3c3c8 60%,transparent 60%);background-size:1px 5px"></div>
<div style="left:1262px;top:467px;width:1px;height:22px;background-image:linear-gradient(to bottom,#c3c3c8 60%,transparent 60%);background-size:1px 5px"></div>
<div style="left:1352px;top:467px;width:1px;height:22px;background-image:linear-gradient(to bottom,#c3c3c8 60%,transparent 60%);background-size:1px 5px"></div>
<div style="left:1532px;top:467px;width:1px;height:22px;background-image:linear-gradient(to bottom,#c3c3c8 60%,transparent 60%);background-size:1px 5px"></div>
<div style="left:1622px;top:467px;width:1px;height:22px;background-image:linear-gradient(to bottom,#c3c3c8 60%,transparent 60%);background-size:1px 5px"></div>
<div style="left:1753px;top:467px;width:1px;height:22px;background-image:linear-gradient(to bottom,#c3c3c8 60%,transparent 60%);background-size:1px 5px"></div>
<div style="left:1833px;top:467px;width:1px;height:22px;background-image:linear-gradient(to bottom,#c3c3c8 60%,transparent 60%);background-size:1px 5px"></div>
<div style="left:903px;top:489px;width:1011px;height:22px;background:#fff"></div>
<div style="left:1673px;top:489px;width:241px;height:22px;background:#f2f2f3"></div>
<div style="left:903px;top:510px;width:1011px;height:1px;background-image:linear-gradient(to right,#c3c3c8 60%,transparent 60%);background-size:5px 1px"></div>
<div style="left:1172px;top:489px;width:1px;height:22px;background:#c8c8cd"></div>
<div style="left:1442px;top:489px;width:1px;height:22px;background:#c8c8cd"></div>
<div style="left:1673px;top:489px;width:1px;height:22px;background:#c8c8cd"></div>
<div style="left:992px;top:489px;width:1px;height:22px;background-image:linear-gradient(to bottom,#c3c3c8 60%,transparent 60%);background-size:1px 5px"></div>
<div style="left:1082px;top:489px;width:1px;height:22px;background-image:linear-gradient(to bottom,#c3c3c8 60%,transparent 60%);background-size:1px 5px"></div>
<div style="left:1262px;top:489px;width:1px;height:22px;background-image:linear-gradient(to bottom,#c3c3c8 60%,transparent 60%);background-size:1px 5px"></div>
<div style="left:1352px;top:489px;width:1px;height:22px;background-image:linear-gradient(to bottom,#c3c3c8 60%,transparent 60%);background-size:1px 5px"></div>
<div style="left:1532px;top:489px;width:1px;height:22px;background-image:linear-gradient(to bottom,#c3c3c8 60%,transparent 60%);background-size:1px 5px"></div>
<div style="left:1622px;top:489px;width:1px;height:22px;background-image:linear-gradient(to bottom,#c3c3c8 60%,transparent 60%);background-size:1px 5px"></div>
<div style="left:1753px;top:489px;width:1px;height:22px;background-image:linear-gradient(to bottom,#c3c3c8 60%,transparent 60%);background-size:1px 5px"></div>
<div style="left:1833px;top:489px;width:1px;height:22px;background-image:linear-gradient(to bottom,#c3c3c8 60%,transparent 60%);background-size:1px 5px"></div>
<div style="left:903px;top:511px;width:1011px;height:8px;background:#f3f3f5"></div>
<div style="left:903px;top:510px;width:1011px;height:1px;background:#6b98cf"></div>
<div style="left:903px;top:510px;width:1011px;height:1px;background-image:linear-gradient(to right,#4a7fc0 60%,transparent 60%);background-size:5px 1px"></div>
<div style="left:1673px;top:137px;width:1px;height:382px;background:#c3c6cc"></div>
<div style="left:107px;top:517px;width:12px;height:2px;border:1px solid #fff;border-bottom:none;border-radius:2px 2px 0 0;box-sizing:border-box"></div>
<div style="left:64px;top:138px;width:1px;height:381px;background:#e2e2e6"></div>
<div style="left:903px;top:111px;width:1008px;height:1px;background:#d6d6da"></div>
<div style="left:903px;top:136px;width:1008px;height:1px;background:#d6d6da"></div>
<div style="left:1172px;top:88px;width:1px;height:49px;background:#d0d0d5"></div>
<div style="left:1442px;top:88px;width:1px;height:49px;background:#d0d0d5"></div>
<div style="left:1673px;top:88px;width:1px;height:49px;background:#d0d0d5"></div>
<div style="left:992px;top:112px;width:1px;height:25px;background-image:linear-gradient(to bottom,#c3c3c8 60%,transparent 60%);background-size:1px 5px"></div>
<div style="left:1082px;top:112px;width:1px;height:25px;background-image:linear-gradient(to bottom,#c3c3c8 60%,transparent 60%);background-size:1px 5px"></div>
<div style="left:1262px;top:112px;width:1px;height:25px;background-image:linear-gradient(to bottom,#c3c3c8 60%,transparent 60%);background-size:1px 5px"></div>
<div style="left:1352px;top:112px;width:1px;height:25px;background-image:linear-gradient(to bottom,#c3c3c8 60%,transparent 60%);background-size:1px 5px"></div>
<div style="left:1532px;top:112px;width:1px;height:25px;background-image:linear-gradient(to bottom,#c3c3c8 60%,transparent 60%);background-size:1px 5px"></div>
<div style="left:1622px;top:112px;width:1px;height:25px;background-image:linear-gradient(to bottom,#c3c3c8 60%,transparent 60%);background-size:1px 5px"></div>
<div class="t" style="left:988px;top:91px;width:100px;height:18px;line-height:18px;text-align:center;font-size:12px;color:#222"><span style="display:inline-block;transform:scaleX(0.94);transform-origin:center">04.05.2025</span></div>
<div class="t" style="left:1258px;top:91px;width:100px;height:18px;line-height:18px;text-align:center;font-size:12px;color:#222"><span style="display:inline-block;transform:scaleX(0.94);transform-origin:center">05.05.2025</span></div>
<div class="t" style="left:1528px;top:91px;width:100px;height:18px;line-height:18px;text-align:center;font-size:12px;color:#222"><span style="display:inline-block;transform:scaleX(0.94);transform-origin:center">06.05.2025</span></div>
<div class="t" style="left:1743px;top:91px;width:100px;height:18px;line-height:18px;text-align:center;font-size:12px;color:#222">Суммарно</div>
<svg style="position:absolute;left:1680px;top:88px" width="230" height="24" viewBox="1680 88 230 24" fill="none" stroke="#46464b" stroke-width="1.8" stroke-linecap="round" stroke-linejoin="round"><path d="M1702.6 92.2l-8.8 8.2 8.8 8.2M1885.4 92.2l8.8 8.2-8.8 8.2"/></svg>
<div style="left:1913px;top:89px;width:4px;height:37px;background:#d6d6da;border-radius:2px"></div>
<div class="t" style="left:903px;top:116px;width:90px;height:18px;line-height:18px;text-align:center;font-size:12px;color:#222"><span style="display:inline-block;transform:scaleX(0.955);transform-origin:center">Согл.план</span></div>
<div class="t" style="left:993px;top:116px;width:90px;height:18px;line-height:18px;text-align:center;font-size:12px;color:#222"><span style="display:inline-block;transform:scaleX(0.955);transform-origin:center">Опер.план</span></div>
<div class="t" style="left:1083px;top:116px;width:90px;height:18px;line-height:18px;text-align:center;font-size:12px;color:#222"><span style="display:inline-block;transform:scaleX(0.955);transform-origin:center">Факт</span></div>
<div class="t" style="left:1173px;top:116px;width:90px;height:18px;line-height:18px;text-align:center;font-size:12px;color:#222"><span style="display:inline-block;transform:scaleX(0.955);transform-origin:center">Согл.план</span></div>
<div class="t" style="left:1263px;top:116px;width:90px;height:18px;line-height:18px;text-align:center;font-size:12px;color:#222"><span style="display:inline-block;transform:scaleX(0.955);transform-origin:center">Опер.план</span></div>
<div class="t" style="left:1353px;top:116px;width:90px;height:18px;line-height:18px;text-align:center;font-size:12px;color:#222"><span style="display:inline-block;transform:scaleX(0.955);transform-origin:center">Факт</span></div>
<div class="t" style="left:1443px;top:116px;width:90px;height:18px;line-height:18px;text-align:center;font-size:12px;color:#222"><span style="display:inline-block;transform:scaleX(0.955);transform-origin:center">Согл.план</span></div>
<div class="t" style="left:1533px;top:116px;width:90px;height:18px;line-height:18px;text-align:center;font-size:12px;color:#222"><span style="display:inline-block;transform:scaleX(0.955);transform-origin:center">Опер.план</span></div>
<div class="t" style="left:1623px;top:116px;width:90px;height:18px;line-height:18px;text-align:center;font-size:12px;color:#222"><span style="display:inline-block;transform:scaleX(0.955);transform-origin:center">Факт</span></div>
<div style="left:1674px;top:112px;width:237px;height:24px;background:#fff"></div>
<div class="t" style="left:1673px;top:116px;width:80px;height:18px;line-height:18px;text-align:center;font-size:12px;color:#222"><span style="display:inline-block;transform:scaleX(0.955);transform-origin:center">Согл.план</span></div>
<div class="t" style="left:1751px;top:116px;width:80px;height:18px;line-height:18px;text-align:center;font-size:12px;color:#222"><span style="display:inline-block;transform:scaleX(0.955);transform-origin:center">Опер.план</span></div>
<div class="t" style="left:1831px;top:116px;width:80px;height:18px;line-height:18px;text-align:center;font-size:12px;color:#222"><span style="display:inline-block;transform:scaleX(0.955);transform-origin:center">Факт</span></div>
<div style="left:1751px;top:112px;width:1px;height:25px;background-image:linear-gradient(to bottom,#c3c3c8 60%,transparent 60%);background-size:1px 5px"></div>
<div style="left:1831px;top:112px;width:1px;height:25px;background-image:linear-gradient(to bottom,#c3c3c8 60%,transparent 60%);background-size:1px 5px"></div>
<div style="left:1911px;top:112px;width:1px;height:25px;background:#d6d6da"></div>
<div style="left:1914px;top:137px;width:3px;height:382px;background:#f3f3f5"></div>
<div style="left:1912px;top:88px;width:5px;height:49px;background:#f3f3f5"></div>
<div class="t" style="left:1673px;top:204px;width:81px;height:22px;line-height:22px;text-align:center;font-size:12px;color:#222"><span style="display:inline-block;transform:scaleX(0.93);transform-origin:center">602</span></div>
<div class="t" style="left:1753px;top:204px;width:81px;height:22px;line-height:22px;text-align:center;font-size:12px;color:#222"><span style="display:inline-block;transform:scaleX(0.93);transform-origin:center">602</span></div>
<div class="t" style="left:1833px;top:204px;width:81px;height:22px;line-height:22px;text-align:center;font-size:12px;color:#222"><span style="display:inline-block;transform:scaleX(0.93);transform-origin:center">602</span></div>
<div class="t" style="left:1673px;top:226px;width:81px;height:22px;line-height:22px;text-align:center;font-size:12px;color:#222"><span style="display:inline-block;transform:scaleX(0.93);transform-origin:center">1 500</span></div>
<div class="t" style="left:1753px;top:226px;width:81px;height:22px;line-height:22px;text-align:center;font-size:12px;color:#222"><span style="display:inline-block;transform:scaleX(0.93);transform-origin:center">1 500</span></div>
<div class="t" style="left:1833px;top:226px;width:81px;height:22px;line-height:22px;text-align:center;font-size:12px;color:#222"><span style="display:inline-block;transform:scaleX(0.93);transform-origin:center">1 500</span></div>
<div class="t" style="left:1673px;top:314px;width:81px;height:22px;line-height:22px;text-align:center;font-size:12px;color:#222"><span style="display:inline-block;transform:scaleX(0.93);transform-origin:center">4</span></div>
<div class="t" style="left:1753px;top:314px;width:81px;height:22px;line-height:22px;text-align:center;font-size:12px;color:#222"><span style="display:inline-block;transform:scaleX(0.93);transform-origin:center">4</span></div>
<div class="t" style="left:1833px;top:314px;width:81px;height:22px;line-height:22px;text-align:center;font-size:12px;color:#222"><span style="display:inline-block;transform:scaleX(0.93);transform-origin:center">4</span></div>
<div class="t" style="left:1673px;top:336px;width:81px;height:22px;line-height:22px;text-align:center;font-size:12px;color:#222"><span style="display:inline-block;transform:scaleX(0.93);transform-origin:center">4</span></div>
<div class="t" style="left:1753px;top:336px;width:81px;height:22px;line-height:22px;text-align:center;font-size:12px;color:#222"><span style="display:inline-block;transform:scaleX(0.93);transform-origin:center">4</span></div>
<div class="t" style="left:1833px;top:336px;width:81px;height:22px;line-height:22px;text-align:center;font-size:12px;color:#222"><span style="display:inline-block;transform:scaleX(0.93);transform-origin:center">4</span></div>
<div class="t" style="left:1673px;top:358px;width:81px;height:22px;line-height:22px;text-align:center;font-size:12px;color:#222"><span style="display:inline-block;transform:scaleX(0.93);transform-origin:center">4</span></div>
<div class="t" style="left:1753px;top:358px;width:81px;height:22px;line-height:22px;text-align:center;font-size:12px;color:#222"><span style="display:inline-block;transform:scaleX(0.93);transform-origin:center">4</span></div>
<div class="t" style="left:1833px;top:358px;width:81px;height:22px;line-height:22px;text-align:center;font-size:12px;color:#222"><span style="display:inline-block;transform:scaleX(0.93);transform-origin:center">4</span></div>
<div class="t" style="left:1673px;top:380px;width:81px;height:22px;line-height:22px;text-align:center;font-size:12px;color:#222"><span style="display:inline-block;transform:scaleX(0.93);transform-origin:center">4</span></div>
<div class="t" style="left:1753px;top:380px;width:81px;height:22px;line-height:22px;text-align:center;font-size:12px;color:#222"><span style="display:inline-block;transform:scaleX(0.93);transform-origin:center">4</span></div>
<div class="t" style="left:1833px;top:380px;width:81px;height:22px;line-height:22px;text-align:center;font-size:12px;color:#222"><span style="display:inline-block;transform:scaleX(0.93);transform-origin:center">4</span></div>
<div class="t" style="left:1673px;top:402px;width:81px;height:22px;line-height:22px;text-align:center;font-size:12px;color:#222"><span style="display:inline-block;transform:scaleX(0.93);transform-origin:center">55</span></div>
<div class="t" style="left:1753px;top:402px;width:81px;height:22px;line-height:22px;text-align:center;font-size:12px;color:#222"><span style="display:inline-block;transform:scaleX(0.93);transform-origin:center">55</span></div>
<div class="t" style="left:1833px;top:402px;width:81px;height:22px;line-height:22px;text-align:center;font-size:12px;color:#222"><span style="display:inline-block;transform:scaleX(0.93);transform-origin:center">55</span></div>
<div class="t" style="left:1673px;top:446px;width:81px;height:22px;line-height:22px;text-align:center;font-size:12px;color:#222"><span style="display:inline-block;transform:scaleX(0.93);transform-origin:center">28</span></div>
<div class="t" style="left:1753px;top:446px;width:81px;height:22px;line-height:22px;text-align:center;font-size:12px;color:#222"><span style="display:inline-block;transform:scaleX(0.93);transform-origin:center">28</span></div>
<div class="t" style="left:1833px;top:446px;width:81px;height:22px;line-height:22px;text-align:center;font-size:12px;color:#222"><span style="display:inline-block;transform:scaleX(0.93);transform-origin:center">28</span></div>
<div class="t" style="left:1673px;top:468px;width:81px;height:22px;line-height:22px;text-align:center;font-size:12px;color:#222"><span style="display:inline-block;transform:scaleX(0.93);transform-origin:center">30.7</span></div>
<div class="t" style="left:1753px;top:468px;width:81px;height:22px;line-height:22px;text-align:center;font-size:12px;color:#222"><span style="display:inline-block;transform:scaleX(0.93);transform-origin:center">30.7</span></div>
<div class="t" style="left:1833px;top:468px;width:81px;height:22px;line-height:22px;text-align:center;font-size:12px;color:#222"><span style="display:inline-block;transform:scaleX(0.93);transform-origin:center">30.7</span></div>
<div class="t" style="left:1673px;top:490px;width:81px;height:22px;line-height:22px;text-align:center;font-size:12px;color:#222"><span style="display:inline-block;transform:scaleX(0.93);transform-origin:center">2.75</span></div>
<div class="t" style="left:1753px;top:490px;width:81px;height:22px;line-height:22px;text-align:center;font-size:12px;color:#222"><span style="display:inline-block;transform:scaleX(0.93);transform-origin:center">2.75</span></div>
<div class="t" style="left:1833px;top:490px;width:81px;height:22px;line-height:22px;text-align:center;font-size:12px;color:#222"><span style="display:inline-block;transform:scaleX(0.93);transform-origin:center">2.75</span></div>
<div class="t" style="left:903px;top:248px;width:90px;height:22px;line-height:22px;text-align:center;font-size:12px;color:#222"><span style="display:inline-block;transform:scaleX(0.93);transform-origin:center">18.5</span></div>
<div class="t" style="left:993px;top:248px;width:90px;height:22px;line-height:22px;text-align:center;font-size:12px;color:#222"><span style="display:inline-block;transform:scaleX(0.93);transform-origin:center">18.5</span></div>
<div class="t" style="left:1082px;top:248px;width:90px;height:22px;line-height:22px;text-align:center;font-size:12px;color:#f04e4e"><span style="display:inline-block;transform:scaleX(0.93);transform-origin:center">10</span></div>
<div class="t" style="left:1173px;top:248px;width:90px;height:22px;line-height:22px;text-align:center;font-size:12px;color:#222"><span style="display:inline-block;transform:scaleX(0.93);transform-origin:center">18.5</span></div>
<div class="t" style="left:1263px;top:248px;width:90px;height:22px;line-height:22px;text-align:center;font-size:12px;color:#222"><span style="display:inline-block;transform:scaleX(0.93);transform-origin:center">18.5</span></div>
<div class="t" style="left:1353px;top:248px;width:90px;height:22px;line-height:22px;text-align:center;font-size:12px;color:#4cb84c"><span style="display:inline-block;transform:scaleX(0.93);transform-origin:center">18.5</span></div>
<div class="t" style="left:1673px;top:248px;width:81px;height:22px;line-height:22px;text-align:center;font-size:12px;color:#222"><span style="display:inline-block;transform:scaleX(0.93);transform-origin:center">37</span></div>
<div class="t" style="left:1753px;top:248px;width:81px;height:22px;line-height:22px;text-align:center;font-size:12px;color:#222"><span style="display:inline-block;transform:scaleX(0.93);transform-origin:center">37</span></div>
<div class="t" style="left:1833px;top:248px;width:81px;height:22px;line-height:22px;text-align:center;font-size:12px;color:#222"><span style="display:inline-block;transform:scaleX(0.93);transform-origin:center">28.5</span></div>
<div style="left:1443px;top:313px;width:230px;height:21px;background:#c5dcf0"></div>
<div style="left:1532px;top:313px;width:1px;height:22px;background-image:linear-gradient(to bottom,#c3c3c8 60%,transparent 60%);background-size:1px 5px"></div>
<div style="left:1622px;top:313px;width:1px;height:22px;background-image:linear-gradient(to bottom,#c3c3c8 60%,transparent 60%);background-size:1px 5px"></div>
<div class="t" style="left:1443px;top:314px;width:90px;height:22px;line-height:22px;text-align:center;font-size:12px;color:#222"><span style="display:inline-block;transform:scaleX(0.93);transform-origin:center">2</span></div>
<div class="t" style="left:1533px;top:314px;width:90px;height:22px;line-height:22px;text-align:center;font-size:12px;color:#222"><span style="display:inline-block;transform:scaleX(0.93);transform-origin:center">2</span></div>
<div class="t" style="left:1623px;top:314px;width:48px;height:22px;line-height:22px;text-align:right;font-size:12px;color:#4cb84c"><span style="display:inline-block;transform:scaleX(0.93);transform-origin:right">2</span></div>
<div style="left:43px;top:519px;width:854px;height:7px;background:#f3f3f5"></div>
<div style="left:43px;top:520px;width:853px;height:6px;background:#dcdcdf;border-radius:0 3px 3px 0"></div>
<div style="left:903px;top:519px;width:1014px;height:7px;background:#f3f3f5"></div>
<div style="left:903px;top:520px;width:1014px;height:6px;background:#dcdcdf"></div>
<div style="left:1180px;top:514px;width:21px;height:6px;background:#dcdcdf;border-radius:3px"></div>
<div style="left:43px;top:525px;width:1874px;height:6px;background:#b4b4ba"></div>
<div style="left:43px;top:531px;width:1874px;height:377px;background:#fff"></div>
<div class="t" style="left:91px;top:544px;width:230px;height:22px;line-height:22px;font-size:17px;color:#4a4a4e"><span style="display:inline-block;transform:scaleX(1.017);transform-origin:left">Карточка работы</span></div>
<div class="t" style="left:323px;top:544px;width:230px;height:22px;line-height:22px;font-size:17px;color:#4a4a4e"><span style="display:inline-block;transform:scaleX(1.008);transform-origin:left">Связи работы</span></div>
<div class="t" style="left:529px;top:544px;width:230px;height:22px;line-height:22px;font-size:17px;color:#4a4a4e"><span style="display:inline-block;transform:scaleX(1.013);transform-origin:left">Связанные графики</span></div>
<div class="t" style="left:785px;top:544px;width:230px;height:22px;line-height:22px;font-size:17px;color:#4a4a4e"><span style="display:inline-block;transform:scaleX(1.039);transform-origin:left">Справочники</span></div>
<div class="t" style="left:1278px;top:544px;width:230px;height:22px;line-height:22px;font-size:17px;color:#4a4a4e"><span style="display:inline-block;transform:scaleX(1.034);transform-origin:left">Фото / Документация</span></div>
<div class="t" style="left:1547px;top:544px;width:230px;height:22px;line-height:22px;font-size:17px;color:#4a4a4e"><span style="display:inline-block;transform:scaleX(1.022);transform-origin:left">Запросы и поручения</span></div>
<div class="t" style="left:1817px;top:544px;width:230px;height:22px;line-height:22px;font-size:17px;color:#4a4a4e"><span style="display:inline-block;transform:scaleX(0.956);transform-origin:left">Табели</span></div>
<div class="t" style="left:987px;top:544px;width:230px;height:22px;line-height:22px;font-size:17px;color:#1b72d6"><span style="display:inline-block;transform:scaleX(1.019);transform-origin:left">Суточное планирование</span></div>
<div style="left:940px;top:573px;width:291px;height:2px;background:#1b72d6"></div>
<div class="t" style="left:51px;top:583px;width:860px;height:20px;line-height:20px;font-size:14.8px;color:#222"><span style="display:inline-block;transform:scaleX(1.005);transform-origin:left">01.03 Устройство песчаного основания. Сроки 04.05.2025 - 05.05.2025. Прогресс: 100%. Исполнитель: ООО "Георесурс".</span></div>
<div style="left:1020px;top:584px;width:1px;height:44px;background:#c9c9ce"></div>
<div style="left:1161px;top:584px;width:1px;height:44px;background:#c9c9ce"></div>
<div class="t" style="left:1170px;top:597px;height:20px;line-height:20px;font-size:14.8px;color:#222">Вид:</div>
<div style="left:1430px;top:584px;width:1px;height:44px;background:#c9c9ce"></div>
<div style="left:1563px;top:584px;width:1px;height:44px;background:#c9c9ce"></div>
<div style="left:1608px;top:584px;width:1px;height:44px;background:#c9c9ce"></div>
<div class="t" style="left:1617px;top:597px;height:20px;line-height:20px;font-size:14.8px;color:#222">Переходы:</div>
<div style="left:1787px;top:584px;width:1px;height:44px;background:#c9c9ce"></div>
<svg style="position:absolute;left:0;top:0" width="1917" height="908" viewBox="0 0 1917 908" fill="none" stroke="#46464b" stroke-width="2" stroke-linecap="round" stroke-linejoin="round"><g transform="translate(-219.2,540.6)"><text x="1270.3" y="63.8" text-anchor="middle" font-family="Liberation Sans" font-weight="bold" font-size="14" fill="#46464b" stroke="none">123</text><path d="M1258.5 72.7h23.5M1262.6 68.6l-4.1 4.1 4.1 4.1M1277.9 68.6l4.1 4.1-4.1 4.1" stroke-width="2.2"/><path d="M1307 54.5v5.8" stroke-width="2.2"/><path d="M1307 63.2h.01" stroke-width="2.4"/><path d="M1314.8 57.2h11M1322 53.4l3.8 3.8-3.8 3.8M1302.5 72.7h11.4M1306.3 68.9l-3.8 3.8 3.8 3.8" stroke-width="2.2"/><path d="M1318 68a3.3 3.3 0 1 1 4.6 3c-1 .5-1.6 1-1.6 2.2" stroke-width="2.2"/><path d="M1321 75.8h.01" stroke-width="2.4"/><path d="M1347.5 57h21.5" stroke-width="2.2"/><path d="M1353 57c0-2.6 2.2-3.7 5.4-3.7s5.4 1.1 5.4 3.7z" fill="#46464b" stroke="none"/><path d="M1351.5 60.5v13.2a2 2 0 0 0 2 2h9.8a2 2 0 0 0 2-2V60.5" stroke-width="2.2"/></g><g transform="translate(-51.2,540.6)"><rect x="1495.3" y="56.3" width="16.4" height="19.3" rx="3"/><rect x="1498.3" y="53" width="10.4" height="6.5" rx="1.2" fill="#46464b" stroke="none"/><path d="M1503.5 63.6v5.6" stroke-width="2.2"/><path d="M1503.5 72.2h.01" stroke-width="2.4"/></g><g transform="translate(-51.7,540.6)"><rect x="1539.5" y="56.3" width="16.4" height="19.3" rx="3"/><rect x="1542.5" y="53" width="10.4" height="6.5" rx="1.2" fill="#46464b" stroke="none"/><path d="M1545 66.2a2.8 2.8 0 1 1 3.9 2.6c-.8.4-1.2.9-1.2 1.7" stroke-width="2"/><path d="M1547.7 72.6h.01" stroke-width="2.4"/></g><g transform="translate(-51.2,540.6)"><rect x="1583.5" y="56.3" width="16.4" height="19.3" rx="3"/><rect x="1586.5" y="53" width="10.4" height="6.5" rx="1.2" fill="#46464b" stroke="none"/><path d="M1587.5 67.6l3.3 3 6-6.4" stroke-width="2.2"/></g><g transform="translate(-315.4,540.6)"><rect x="1891.2" y="56.8" width="19.6" height="18.299999999999997" rx="3"/><path d="M1891.2 60.8h19.6M1896 53.199999999999996v2.6M1906 53.199999999999996v2.6"/><path d="M1897 61.4v13.8M1901 61.4v13.8M1905 61.4v13.8"/></g><g transform="translate(83.9,540.6)" stroke="#a9a9ae"><rect x="1627.1000000000001" y="56.8" width="19.6" height="18.299999999999997" rx="3"/><path d="M1627.1000000000001 60.8h19.6M1631.9 53.199999999999996v2.6M1641.9 53.199999999999996v2.6"/><path d="M1631.5 62.4v12.4"/><path d="M1642.3000000000002 64.0v9.2l-6.8-4.6z" fill="#a9a9ae" stroke-width="1"/></g><g transform="translate(83.9,540.6)" stroke="#a9a9ae"><rect x="1671.1000000000001" y="56.8" width="19.6" height="18.299999999999997" rx="3"/><path d="M1671.1000000000001 60.8h19.6M1675.9 53.199999999999996v2.6M1685.9 53.199999999999996v2.6"/><path d="M1675.7 62.4v12.4"/><path d="M1680.2 64.0v9.2l6.4-4.6z" fill="#a9a9ae" stroke-width="1"/></g><g transform="translate(84.8,540.6)"><rect x="1715.1000000000001" y="56.8" width="19.6" height="18.299999999999997" rx="3"/><path d="M1715.1000000000001 60.8h19.6M1719.9 53.199999999999996v2.6M1729.9 53.199999999999996v2.6"/><text x="1725.1000000000001" y="72.8" text-anchor="middle" font-family="Liberation Sans" font-weight="bold" font-size="11.5" fill="#46464b" stroke="none">S</text></g><g transform="translate(84.7,540.6)"><rect x="1759.2" y="56.8" width="19.6" height="18.299999999999997" rx="3"/><path d="M1759.2 60.8h19.6M1764 53.199999999999996v2.6M1774 53.199999999999996v2.6"/><text x="1769.2" y="72.8" text-anchor="middle" font-family="Liberation Sans" font-weight="bold" font-size="11.5" fill="#46464b" stroke="none">D</text></g><g transform="translate(84.7,540.6)"><rect x="1803.1000000000001" y="56.8" width="19.6" height="18.299999999999997" rx="3"/><path d="M1803.1000000000001 60.8h19.6M1807.9 53.199999999999996v2.6M1817.9 53.199999999999996v2.6"/><text x="1813.1000000000001" y="72.8" text-anchor="middle" font-family="Liberation Sans" font-weight="bold" font-size="11.5" fill="#46464b" stroke="none">F</text></g><circle cx="910" cy="605.6" r="10.9"/><path d="M903.8 605.6l2.8 2.9 4.4-4.8M908.4 605.4l2.2 2.2 5.4-5.3" stroke-width="1.9"/><g stroke="#b0b0b5" stroke-width="1.8"><circle cx="953.9" cy="605.6" r="10.8"/><path d="M949.3 605.6l4 2.8 5.2-5.6"/></g><g stroke="#b0b0b5" stroke-width="1.8"><circle cx="997.9" cy="605.6" r="10.8"/><path d="M993.8 601.6l8 8M1001.8 601.6l-8 8"/></g><circle cx="1231.4" cy="596.6" r="2.1" fill="#46464b" stroke="none"/><path d="M1220.4 603.3c.6-2.6 3.8-4.4 7-4.2 1.8.1 2.6 1 2.4 2.2l-1 3.6-3.8 1.5z" fill="#46464b" stroke="none"/><path d="M1223.4 607.4l-3.4 9M1226.8 607.2l.8 9.4M1223 605.5l12.6 7.8M1229.6 603.2l2.2 4.6" stroke-width="2"/><path d="M1230.4 617h13.2l-5-9.4z" fill="#46464b" stroke="none"/><path d="M1268.2 601.2h13.8c0-3.8-2.4-6.4-6.9-6.6s-6.9 2.8-6.9 6.6z" fill="#46464b" stroke="none"/><path d="M1275.1 593.8v2" stroke-width="2"/><path d="M1271.8 602.2a3.4 3.4 0 0 0 6.8 0" stroke-width="1.9"/><path d="M1266 617.2c0-4.6 4-7.8 9.2-7.8s9.2 3.2 9.2 7.8" stroke-width="2"/><g stroke-width="1.7"><ellipse cx="1319.6" cy="597.6" rx="5.2" ry="2.3"/><path d="M1314.3999999999999 597.6V604.0c0 1.3 2.3 2.3 5.2 2.3s5.2-1 5.2-2.3V597.6"/><path d="M1314.3999999999999 600.8000000000001c0 1.3 2.3 2.3 5.2 2.3s5.2-1 5.2-2.3"/><ellipse cx="1313.8" cy="608" rx="5.2" ry="2.3" fill="#fff"/><ellipse cx="1313.8" cy="608" rx="5.2" ry="2.3"/><path d="M1308.6 608V614.4c0 1.3 2.3 2.3 5.2 2.3s5.2-1 5.2-2.3V608"/><path d="M1308.6 611.2c0 1.3 2.3 2.3 5.2 2.3s5.2-1 5.2-2.3"/><g fill="#fff"><ellipse cx="1325.4" cy="603.2" rx="5.2" ry="2.3"/><path d="M1320.2 603.2V612.8c0 1.3 2.3 2.3 5.2 2.3s5.2-1 5.2-2.3V603.2z"/></g><ellipse cx="1325.4" cy="603.2" rx="5.2" ry="2.3"/><path d="M1320.2 603.2V612.8000000000001c0 1.3 2.3 2.3 5.2 2.3s5.2-1 5.2-2.3V603.2"/><path d="M1320.2 606.4000000000001c0 1.3 2.3 2.3 5.2 2.3s5.2-1 5.2-2.3"/><path d="M1320.2 609.6c0 1.3 2.3 2.3 5.2 2.3s5.2-1 5.2-2.3"/></g><path d="M1356.8 603h13.8l-3.2-5-2.6 2.2-2.4-3.6z" fill="#46464b" stroke="none"/><path d="M1352.4 604.4h22l-3.6 5h-14.8z" stroke-width="2"/><circle cx="1356.8" cy="612.2" r="2.2" stroke-width="1.8"/><circle cx="1370.2" cy="612.2" r="2.2" stroke-width="1.8"/><path d="M1359.4 612.2h8.2" stroke-width="1.8"/><g stroke-width="1.5"><ellipse cx="1408.4" cy="596.2" rx="4.2" ry="1.9"/><path d="M1404.2 596.2V599.0c0 1.3 2.3 2.3 4.2 2.3s4.2-1 4.2-2.3V596.2"/><ellipse cx="1402.4" cy="603" rx="4.4" ry="1.9" fill="#fff"/><ellipse cx="1402.4" cy="603" rx="4.4" ry="1.9"/><path d="M1398.0 603V608.4c0 1.3 2.3 2.3 4.4 2.3s4.4-1 4.4-2.3V603"/><path d="M1398.0 605.7c0 1.3 2.3 2.3 4.4 2.3s4.4-1 4.4-2.3"/><path d="M1408.6 601.4V609c0 1.1 1.9 1.9 4.2 1.9s4.2-.8 4.2-1.9v-7.6z" fill="#fff"/><ellipse cx="1412.8" cy="601.4" rx="4.2" ry="1.9"/><path d="M1408.6 601.4V609.1999999999999c0 1.3 2.3 2.3 4.2 2.3s4.2-1 4.2-2.3V601.4"/><path d="M1408.6 604.0c0 1.3 2.3 2.3 4.2 2.3s4.2-1 4.2-2.3"/><path d="M1408.6 606.6c0 1.3 2.3 2.3 4.2 2.3s4.2-1 4.2-2.3"/></g><path d="M1398 613.8h19M1414.2 610.8l3 3-3 3" stroke-width="1.7"/><g transform="translate(-812.73,269.95) scale(0.71)"><circle cx="1231.4" cy="596.6" r="2.1" fill="#46464b" stroke="none"/><path d="M1220.4 603.3c.6-2.6 3.8-4.4 7-4.2 1.8.1 2.6 1 2.4 2.2l-1 3.6-3.8 1.5z" fill="#46464b" stroke="none"/><path d="M1223.4 607.4l-3.4 9M1226.8 607.2l.8 9.4M1223 605.5l12.6 7.8M1229.6 603.2l2.2 4.6" stroke-width="2"/><path d="M1230.4 617h13.2l-5-9.4z" fill="#46464b" stroke="none"/></g><g transform="translate(-844.15,314.52) scale(0.71)"><path d="M1268.2 601.2h13.8c0-3.8-2.4-6.4-6.9-6.6s-6.9 2.8-6.9 6.6z" fill="#46464b" stroke="none"/><path d="M1275.1 593.8v2" stroke-width="2"/><path d="M1271.8 602.2a3.4 3.4 0 0 0 6.8 0" stroke-width="1.9"/><path d="M1266 617.2c0-4.6 4-7.8 9.2-7.8s9.2 3.2 9.2 7.8" stroke-width="2"/></g><g transform="translate(-875.35,358.92) scale(0.71)"><g stroke-width="1.7"><ellipse cx="1319.6" cy="597.6" rx="5.2" ry="2.3"/><path d="M1314.3999999999999 597.6V604.0c0 1.3 2.3 2.3 5.2 2.3s5.2-1 5.2-2.3V597.6"/><path d="M1314.3999999999999 600.8000000000001c0 1.3 2.3 2.3 5.2 2.3s5.2-1 5.2-2.3"/><ellipse cx="1313.8" cy="608" rx="5.2" ry="2.3" fill="#fff"/><ellipse cx="1313.8" cy="608" rx="5.2" ry="2.3"/><path d="M1308.6 608V614.4c0 1.3 2.3 2.3 5.2 2.3s5.2-1 5.2-2.3V608"/><path d="M1308.6 611.2c0 1.3 2.3 2.3 5.2 2.3s5.2-1 5.2-2.3"/><g fill="#fff"><ellipse cx="1325.4" cy="603.2" rx="5.2" ry="2.3"/><path d="M1320.2 603.2V612.8c0 1.3 2.3 2.3 5.2 2.3s5.2-1 5.2-2.3V603.2z"/></g><ellipse cx="1325.4" cy="603.2" rx="5.2" ry="2.3"/><path d="M1320.2 603.2V612.8000000000001c0 1.3 2.3 2.3 5.2 2.3s5.2-1 5.2-2.3V603.2"/><path d="M1320.2 606.4000000000001c0 1.3 2.3 2.3 5.2 2.3s5.2-1 5.2-2.3"/><path d="M1320.2 609.6c0 1.3 2.3 2.3 5.2 2.3s5.2-1 5.2-2.3"/></g></g><g transform="translate(-937.97,402.87) scale(0.71)"><g stroke-width="1.5"><ellipse cx="1408.4" cy="596.2" rx="4.2" ry="1.9"/><path d="M1404.2 596.2V599.0c0 1.3 2.3 2.3 4.2 2.3s4.2-1 4.2-2.3V596.2"/><ellipse cx="1402.4" cy="603" rx="4.4" ry="1.9" fill="#fff"/><ellipse cx="1402.4" cy="603" rx="4.4" ry="1.9"/><path d="M1398.0 603V608.4c0 1.3 2.3 2.3 4.4 2.3s4.4-1 4.4-2.3V603"/><path d="M1398.0 605.7c0 1.3 2.3 2.3 4.4 2.3s4.4-1 4.4-2.3"/><path d="M1408.6 601.4V609c0 1.1 1.9 1.9 4.2 1.9s4.2-.8 4.2-1.9v-7.6z" fill="#fff"/><ellipse cx="1412.8" cy="601.4" rx="4.2" ry="1.9"/><path d="M1408.6 601.4V609.1999999999999c0 1.3 2.3 2.3 4.2 2.3s4.2-1 4.2-2.3V601.4"/><path d="M1408.6 604.0c0 1.3 2.3 2.3 4.2 2.3s4.2-1 4.2-2.3"/><path d="M1408.6 606.6c0 1.3 2.3 2.3 4.2 2.3s4.2-1 4.2-2.3"/></g><path d="M1398 613.8h19M1414.2 610.8l3 3-3 3" stroke-width="1.7"/></g><g transform="translate(-906.66,446.67) scale(0.71)"><path d="M1356.8 603h13.8l-3.2-5-2.6 2.2-2.4-3.6z" fill="#46464b" stroke="none"/><path d="M1352.4 604.4h22l-3.6 5h-14.8z" stroke-width="2"/><circle cx="1356.8" cy="612.2" r="2.2" stroke-width="1.8"/><circle cx="1370.2" cy="612.2" r="2.2" stroke-width="1.8"/><path d="M1359.4 612.2h8.2" stroke-width="1.8"/></g></svg>
<div style="left:43px;top:628px;width:1874px;height:1px;background:#c9c9cf"></div>
<div style="left:43px;top:653px;width:1871px;height:1px;background:#c9c9cf"></div>
<div style="left:43px;top:678px;width:1871px;height:1px;background:#c9c9cf"></div>
<div style="left:182px;top:654px;width:1px;height:244px;background:#c9c9cf"></div>
<div style="left:302px;top:654px;width:1px;height:244px;background:#c9c9cf"></div>
<div style="left:423px;top:654px;width:1px;height:244px;background:#c9c9cf"></div>
<div style="left:523px;top:654px;width:1px;height:244px;background:#c9c9cf"></div>
<div style="left:623px;top:654px;width:1px;height:244px;background:#c9c9cf"></div>
<div style="left:723px;top:654px;width:1px;height:244px;background:#c9c9cf"></div>
<div style="left:843px;top:654px;width:1px;height:244px;background:#c9c9cf"></div>
<div style="left:943px;top:654px;width:1px;height:244px;background:#c9c9cf"></div>
<div style="left:943px;top:629px;width:1px;height:269px;background:#c9c9cf"></div>
<div style="left:1153px;top:629px;width:1px;height:269px;background:#c9c9cf"></div>
<div style="left:1364px;top:629px;width:1px;height:269px;background:#c9c9cf"></div>
<div style="left:1574px;top:629px;width:1px;height:269px;background:#c9c9cf"></div>
<div style="left:1784px;top:629px;width:1px;height:269px;background:#c9c9cf"></div>
<div class="t" style="left:42px;top:657px;width:141px;height:18px;line-height:18px;text-align:center;font-size:12px;color:#222"><span style="display:inline-block;transform:scaleX(0.98);transform-origin:center">Тип</span></div>
<div class="t" style="left:183px;top:657px;width:120px;height:18px;line-height:18px;text-align:center;font-size:12px;color:#222"><span style="display:inline-block;transform:scaleX(0.98);transform-origin:center">Наименование</span></div>
<div class="t" style="left:303px;top:657px;width:120px;height:18px;line-height:18px;text-align:center;font-size:12px;color:#222"><span style="display:inline-block;transform:scaleX(0.98);transform-origin:center">Входит в комплек...</span></div>
<div class="t" style="left:423px;top:657px;width:100px;height:18px;line-height:18px;text-align:center;font-size:12px;color:#222"><span style="display:inline-block;transform:scaleX(0.98);transform-origin:center">План</span></div>
<div class="t" style="left:523px;top:657px;width:100px;height:18px;line-height:18px;text-align:center;font-size:12px;color:#222"><span style="display:inline-block;transform:scaleX(0.98);transform-origin:center">Факт</span></div>
<div class="t" style="left:623px;top:657px;width:100px;height:18px;line-height:18px;text-align:center;font-size:12px;color:#222"><span style="display:inline-block;transform:scaleX(0.98);transform-origin:center">Остаток</span></div>
<div class="t" style="left:723px;top:657px;width:120px;height:18px;line-height:18px;text-align:center;font-size:12px;color:#222"><span style="display:inline-block;transform:scaleX(0.98);transform-origin:center">Нераспределенн...</span></div>
<div class="t" style="left:843px;top:657px;width:100px;height:18px;line-height:18px;text-align:center;font-size:12px;color:#222"><span style="display:inline-block;transform:scaleX(0.98);transform-origin:center">Долг</span></div>
<div class="t" style="left:998.0px;top:632px;width:100px;height:18px;line-height:18px;text-align:center;font-size:12px;color:#222"><span style="display:inline-block;transform:scaleX(0.94);transform-origin:center">04.05.2025</span></div>
<div class="t" style="left:1208.5px;top:632px;width:100px;height:18px;line-height:18px;text-align:center;font-size:12px;color:#222"><span style="display:inline-block;transform:scaleX(0.94);transform-origin:center">05.05.2025</span></div>
<div class="t" style="left:1419.0px;top:632px;width:100px;height:18px;line-height:18px;text-align:center;font-size:12px;color:#222"><span style="display:inline-block;transform:scaleX(0.94);transform-origin:center">06.05.2025</span></div>
<div class="t" style="left:1629.0px;top:632px;width:100px;height:18px;line-height:18px;text-align:center;font-size:12px;color:#222"><span style="display:inline-block;transform:scaleX(0.94);transform-origin:center">07.05.2025</span></div>
<div class="t" style="left:1839.0px;top:632px;width:100px;height:18px;line-height:18px;text-align:center;font-size:12px;color:#222"><span style="display:inline-block;transform:scaleX(0.94);transform-origin:center">08.05.2025</span></div>
<div class="t" style="left:943px;top:657px;width:70px;height:18px;line-height:18px;text-align:center;font-size:12px;color:#222"><span style="display:inline-block;transform:scaleX(0.955);transform-origin:center">Согл.план</span></div>
<div class="t" style="left:1013px;top:657px;width:70px;height:18px;line-height:18px;text-align:center;font-size:12px;color:#222"><span style="display:inline-block;transform:scaleX(0.955);transform-origin:center">Опер.план</span></div>
<div class="t" style="left:1083px;top:657px;width:70px;height:18px;line-height:18px;text-align:center;font-size:12px;color:#222"><span style="display:inline-block;transform:scaleX(0.955);transform-origin:center">Факт</span></div>
<div class="t" style="left:1153px;top:657px;width:70px;height:18px;line-height:18px;text-align:center;font-size:12px;color:#222"><span style="display:inline-block;transform:scaleX(0.955);transform-origin:center">Согл.план</span></div>
<div class="t" style="left:1223px;top:657px;width:71px;height:18px;line-height:18px;text-align:center;font-size:12px;color:#222"><span style="display:inline-block;transform:scaleX(0.955);transform-origin:center">Опер.план</span></div>
<div class="t" style="left:1294px;top:657px;width:70px;height:18px;line-height:18px;text-align:center;font-size:12px;color:#222"><span style="display:inline-block;transform:scaleX(0.955);transform-origin:center">Факт</span></div>
<div class="t" style="left:1364px;top:657px;width:70px;height:18px;line-height:18px;text-align:center;font-size:12px;color:#222"><span style="display:inline-block;transform:scaleX(0.955);transform-origin:center">Согл.план</span></div>
<div class="t" style="left:1434px;top:657px;width:70px;height:18px;line-height:18px;text-align:center;font-size:12px;color:#222"><span style="display:inline-block;transform:scaleX(0.955);transform-origin:center">Опер.план</span></div>
<div class="t" style="left:1504px;top:657px;width:70px;height:18px;line-height:18px;text-align:center;font-size:12px;color:#222"><span style="display:inline-block;transform:scaleX(0.955);transform-origin:center">Факт</span></div>
<div class="t" style="left:1574px;top:657px;width:70px;height:18px;line-height:18px;text-align:center;font-size:12px;color:#222"><span style="display:inline-block;transform:scaleX(0.955);transform-origin:center">Согл.план</span></div>
<div class="t" style="left:1644px;top:657px;width:70px;height:18px;line-height:18px;text-align:center;font-size:12px;color:#222"><span style="display:inline-block;transform:scaleX(0.955);transform-origin:center">Опер.план</span></div>
<div class="t" style="left:1714px;top:657px;width:70px;height:18px;line-height:18px;text-align:center;font-size:12px;color:#222"><span style="display:inline-block;transform:scaleX(0.955);transform-origin:center">Факт</span></div>
<div class="t" style="left:1784px;top:657px;width:70px;height:18px;line-height:18px;text-align:center;font-size:12px;color:#222"><span style="display:inline-block;transform:scaleX(0.955);transform-origin:center">Согл.план</span></div>
<div class="t" style="left:1854px;top:657px;width:70px;height:18px;line-height:18px;text-align:center;font-size:12px;color:#222"><span style="display:inline-block;transform:scaleX(0.955);transform-origin:center">Опер.план</span></div>
<div class="t" style="left:1924px;top:657px;width:70px;height:18px;line-height:18px;text-align:center;font-size:12px;color:#222"><span style="display:inline-block;transform:scaleX(0.955);transform-origin:center">Факт</span></div>
<div style="left:1013px;top:654px;width:1px;height:244px;background-image:linear-gradient(to bottom,#c3c3c8 60%,transparent 60%);background-size:1px 5px"></div>
<div style="left:1083px;top:654px;width:1px;height:244px;background-image:linear-gradient(to bottom,#c3c3c8 60%,transparent 60%);background-size:1px 5px"></div>
<div style="left:1223px;top:654px;width:1px;height:244px;background-image:linear-gradient(to bottom,#c3c3c8 60%,transparent 60%);background-size:1px 5px"></div>
<div style="left:1294px;top:654px;width:1px;height:244px;background-image:linear-gradient(to bottom,#c3c3c8 60%,transparent 60%);background-size:1px 5px"></div>
<div style="left:1434px;top:654px;width:1px;height:244px;background-image:linear-gradient(to bottom,#c3c3c8 60%,transparent 60%);background-size:1px 5px"></div>
<div style="left:1504px;top:654px;width:1px;height:244px;background-image:linear-gradient(to bottom,#c3c3c8 60%,transparent 60%);background-size:1px 5px"></div>
<div style="left:1644px;top:654px;width:1px;height:244px;background-image:linear-gradient(to bottom,#c3c3c8 60%,transparent 60%);background-size:1px 5px"></div>
<div style="left:1714px;top:654px;width:1px;height:244px;background-image:linear-gradient(to bottom,#c3c3c8 60%,transparent 60%);background-size:1px 5px"></div>
<div style="left:1854px;top:654px;width:1px;height:244px;background-image:linear-gradient(to bottom,#c3c3c8 60%,transparent 60%);background-size:1px 5px"></div>
<div style="left:1924px;top:654px;width:1px;height:244px;background-image:linear-gradient(to bottom,#c3c3c8 60%,transparent 60%);background-size:1px 5px"></div>
<div style="left:844px;top:679px;width:99px;height:43px;background:#fb8484"></div>
<div style="left:724px;top:811px;width:119px;height:87px;background:#fefe80"></div>
<div style="left:944px;top:679px;width:420px;height:219px;background:#c5dcf0"></div>
<div style="left:1013px;top:679px;width:1px;height:219px;background-image:linear-gradient(to bottom,#c3c3c8 60%,transparent 60%);background-size:1px 5px"></div>
<div style="left:1083px;top:679px;width:1px;height:219px;background-image:linear-gradient(to bottom,#c3c3c8 60%,transparent 60%);background-size:1px 5px"></div>
<div style="left:1223px;top:679px;width:1px;height:219px;background-image:linear-gradient(to bottom,#c3c3c8 60%,transparent 60%);background-size:1px 5px"></div>
<div style="left:1294px;top:679px;width:1px;height:219px;background-image:linear-gradient(to bottom,#c3c3c8 60%,transparent 60%);background-size:1px 5px"></div>
<div style="left:1434px;top:679px;width:1px;height:219px;background-image:linear-gradient(to bottom,#c3c3c8 60%,transparent 60%);background-size:1px 5px"></div>
<div style="left:1504px;top:679px;width:1px;height:219px;background-image:linear-gradient(to bottom,#c3c3c8 60%,transparent 60%);background-size:1px 5px"></div>
<div style="left:1644px;top:679px;width:1px;height:219px;background-image:linear-gradient(to bottom,#c3c3c8 60%,transparent 60%);background-size:1px 5px"></div>
<div style="left:1714px;top:679px;width:1px;height:219px;background-image:linear-gradient(to bottom,#c3c3c8 60%,transparent 60%);background-size:1px 5px"></div>
<div style="left:1854px;top:679px;width:1px;height:219px;background-image:linear-gradient(to bottom,#c3c3c8 60%,transparent 60%);background-size:1px 5px"></div>
<div style="left:1924px;top:679px;width:1px;height:219px;background-image:linear-gradient(to bottom,#c3c3c8 60%,transparent 60%);background-size:1px 5px"></div>
<div style="left:1153px;top:679px;width:1px;height:219px;background:#c9c9cf"></div>
<div style="left:1364px;top:679px;width:1px;height:219px;background:#c9c9cf"></div>
<div style="left:43px;top:722px;width:900px;height:1px;background:#c9c9cf"></div>
<div style="left:943px;top:722px;width:971px;height:1px;background-image:linear-gradient(to right,#c3c3c8 60%,transparent 60%);background-size:5px 1px"></div>
<div style="left:43px;top:766px;width:900px;height:1px;background:#c9c9cf"></div>
<div style="left:943px;top:766px;width:971px;height:1px;background-image:linear-gradient(to right,#c3c3c8 60%,transparent 60%);background-size:5px 1px"></div>
<div style="left:43px;top:810px;width:900px;height:1px;background:#c9c9cf"></div>
<div style="left:943px;top:810px;width:971px;height:1px;background-image:linear-gradient(to right,#c3c3c8 60%,transparent 60%);background-size:5px 1px"></div>
<div style="left:43px;top:854px;width:900px;height:1px;background:#c9c9cf"></div>
<div style="left:943px;top:854px;width:971px;height:1px;background-image:linear-gradient(to right,#c3c3c8 60%,transparent 60%);background-size:5px 1px"></div>
<div style="left:43px;top:898px;width:900px;height:1px;background:#c9c9cf"></div>
<div style="left:943px;top:898px;width:971px;height:1px;background-image:linear-gradient(to right,#c3c3c8 60%,transparent 60%);background-size:5px 1px"></div>
<svg style="position:absolute;left:1084px;top:679px" width="20" height="19" viewBox="0 0 20 19"><path d="M0 0h20L0 19z" fill="#c00000"/></svg>
<svg style="position:absolute;left:1084px;top:723px" width="20" height="19" viewBox="0 0 20 19"><path d="M0 0h20L0 19z" fill="#66cc55"/></svg>
<svg style="position:absolute;left:1084px;top:767px" width="20" height="19" viewBox="0 0 20 19"><path d="M0 0h20L0 19z" fill="#66cc55"/></svg>
<svg style="position:absolute;left:1294px;top:679px" width="20" height="19" viewBox="0 0 20 19"><path d="M0 0h20L0 19z" fill="#66cc55"/></svg>
<svg style="position:absolute;left:1294px;top:723px" width="20" height="19" viewBox="0 0 20 19"><path d="M0 0h20L0 19z" fill="#66cc55"/></svg>
<svg style="position:absolute;left:1294px;top:767px" width="20" height="19" viewBox="0 0 20 19"><path d="M0 0h20L0 19z" fill="#66cc55"/></svg>
<div class="t" style="left:78px;top:680px;width:104px;height:44px;line-height:44px;font-size:12px;color:#222"><span style="display:inline-block;transform:scaleX(0.98);transform-origin:left">Физобъем</span></div>
<div class="t" style="left:78px;top:723.5px;width:104px;height:44px;line-height:44px;font-size:12px;color:#222"><span style="display:inline-block;transform:scaleX(0.98);transform-origin:left">Трудозатраты</span></div>
<div class="t" style="left:78px;top:767.5px;width:104px;height:44px;line-height:44px;font-size:12px;color:#222"><span style="display:inline-block;transform:scaleX(0.98);transform-origin:left">Стоимость</span></div>
<div class="t" style="left:78px;top:811.5px;width:104px;height:44px;line-height:44px;font-size:12px;color:#222"><span style="display:inline-block;transform:scaleX(0.98);transform-origin:left">Распределенная ра</span></div>
<div class="t" style="left:78px;top:855.5px;width:104px;height:44px;line-height:44px;font-size:12px;color:#222"><span style="display:inline-block;transform:scaleX(0.98);transform-origin:left">Машины и механи:</span></div>
<div class="t" style="left:193px;top:680px;width:110px;height:44px;line-height:44px;font-size:12px;color:#222">Устройство песчано</div>
<div class="t" style="left:193px;top:855.5px;width:110px;height:44px;line-height:44px;font-size:12px;color:#222">Самосвал</div>
<div class="t" style="left:423px;top:680px;width:100px;height:44px;line-height:44px;text-align:center;font-size:12px;color:#222;"><span style="display:inline-block;transform:scaleX(0.93);transform-origin:center">37</span></div>
<div class="t" style="left:523px;top:680px;width:100px;height:44px;line-height:44px;text-align:center;font-size:12px;color:#222;"><span style="display:inline-block;transform:scaleX(0.93);transform-origin:center">28.5</span></div>
<div class="t" style="left:623px;top:680px;width:100px;height:44px;line-height:44px;text-align:center;font-size:12px;color:#222;"><span style="display:inline-block;transform:scaleX(0.93);transform-origin:center">8.5</span></div>
<div class="t" style="left:723px;top:680px;width:120px;height:44px;line-height:44px;text-align:center;font-size:12px;color:#222;"><span style="display:inline-block;transform:scaleX(0.93);transform-origin:center">0</span></div>
<div class="t" style="left:843px;top:680px;width:100px;height:44px;line-height:44px;text-align:center;font-size:12px;color:#222;"><span style="display:inline-block;transform:scaleX(0.93);transform-origin:center">8.5</span></div>
<div class="t" style="left:423px;top:723.5px;width:100px;height:44px;line-height:44px;text-align:center;font-size:12px;color:#222;"><span style="display:inline-block;transform:scaleX(0.93);transform-origin:center">86</span></div>
<div class="t" style="left:523px;top:723.5px;width:100px;height:44px;line-height:44px;text-align:center;font-size:12px;color:#222;"><span style="display:inline-block;transform:scaleX(0.93);transform-origin:center">86</span></div>
<div class="t" style="left:623px;top:723.5px;width:100px;height:44px;line-height:44px;text-align:center;font-size:12px;color:#222;"><span style="display:inline-block;transform:scaleX(0.93);transform-origin:center">0</span></div>
<div class="t" style="left:723px;top:723.5px;width:120px;height:44px;line-height:44px;text-align:center;font-size:12px;color:#222;"><span style="display:inline-block;transform:scaleX(0.93);transform-origin:center">0</span></div>
<div class="t" style="left:843px;top:723.5px;width:100px;height:44px;line-height:44px;text-align:center;font-size:12px;color:#222;"><span style="display:inline-block;transform:scaleX(0.93);transform-origin:center">0</span></div>
<div class="t" style="left:423px;top:767.5px;width:100px;height:44px;line-height:44px;text-align:center;font-size:12px;color:#222;"><span style="display:inline-block;transform:scaleX(0.93);transform-origin:center">28 490</span></div>
<div class="t" style="left:523px;top:767.5px;width:100px;height:44px;line-height:44px;text-align:center;font-size:12px;color:#222;"><span style="display:inline-block;transform:scaleX(0.93);transform-origin:center">28 490</span></div>
<div class="t" style="left:623px;top:767.5px;width:100px;height:44px;line-height:44px;text-align:center;font-size:12px;color:#222;"><span style="display:inline-block;transform:scaleX(0.93);transform-origin:center">0</span></div>
<div class="t" style="left:723px;top:767.5px;width:120px;height:44px;line-height:44px;text-align:center;font-size:12px;color:#222;"><span style="display:inline-block;transform:scaleX(0.93);transform-origin:center">0</span></div>
<div class="t" style="left:843px;top:767.5px;width:100px;height:44px;line-height:44px;text-align:center;font-size:12px;color:#222;"><span style="display:inline-block;transform:scaleX(0.93);transform-origin:center">0</span></div>
<div class="t" style="left:423px;top:811.5px;width:100px;height:44px;line-height:44px;text-align:center;font-size:12px;color:#222;"><span style="display:inline-block;transform:scaleX(0.93);transform-origin:center">770</span></div>
<div class="t" style="left:623px;top:811.5px;width:100px;height:44px;line-height:44px;text-align:center;font-size:12px;color:#222;"><span style="display:inline-block;transform:scaleX(0.93);transform-origin:center">770</span></div>
<div class="t" style="left:723px;top:811.5px;width:120px;height:44px;line-height:44px;text-align:center;font-size:12px;color:#222;"><span style="display:inline-block;transform:scaleX(0.93);transform-origin:center">770</span></div>
<div class="t" style="left:623px;top:855.5px;width:100px;height:44px;line-height:44px;text-align:center;font-size:12px;color:#222;"><span style="display:inline-block;transform:scaleX(0.93);transform-origin:center">2</span></div>
<div class="t" style="left:723px;top:855.5px;width:120px;height:44px;line-height:44px;text-align:center;font-size:12px;color:#222;"><span style="display:inline-block;transform:scaleX(0.93);transform-origin:center">2</span></div>
<div class="t" style="left:943px;top:680px;width:70px;height:44px;line-height:44px;text-align:center;font-size:12px;color:#222;"><span style="display:inline-block;transform:scaleX(0.93);transform-origin:center">18.5</span></div>
<div class="t" style="left:1013px;top:680px;width:70px;height:44px;line-height:44px;text-align:center;font-size:12px;color:#222;"><span style="display:inline-block;transform:scaleX(0.93);transform-origin:center">18.5</span></div>
<div class="t" style="left:1083px;top:680px;width:70px;height:44px;line-height:44px;text-align:center;font-size:12px;color:#222;"><span style="display:inline-block;transform:scaleX(0.93);transform-origin:center">10</span></div>
<div class="t" style="left:1153px;top:680px;width:70px;height:44px;line-height:44px;text-align:center;font-size:12px;color:#222;"><span style="display:inline-block;transform:scaleX(0.93);transform-origin:center">18.5</span></div>
<div class="t" style="left:1223px;top:680px;width:71px;height:44px;line-height:44px;text-align:center;font-size:12px;color:#222;"><span style="display:inline-block;transform:scaleX(0.93);transform-origin:center">18.5</span></div>
<div class="t" style="left:1294px;top:680px;width:70px;height:44px;line-height:44px;text-align:center;font-size:12px;color:#222;"><span style="display:inline-block;transform:scaleX(0.93);transform-origin:center">18.5</span></div>
<div class="t" style="left:943px;top:723.5px;width:70px;height:44px;line-height:44px;text-align:center;font-size:12px;color:#222;"><span style="display:inline-block;transform:scaleX(0.93);transform-origin:center">43</span></div>
<div class="t" style="left:1013px;top:723.5px;width:70px;height:44px;line-height:44px;text-align:center;font-size:12px;color:#222;"><span style="display:inline-block;transform:scaleX(0.93);transform-origin:center">43</span></div>
<div class="t" style="left:1083px;top:723.5px;width:70px;height:44px;line-height:44px;text-align:center;font-size:12px;color:#222;"><span style="display:inline-block;transform:scaleX(0.93);transform-origin:center">43</span></div>
<div class="t" style="left:1153px;top:723.5px;width:70px;height:44px;line-height:44px;text-align:center;font-size:12px;color:#222;"><span style="display:inline-block;transform:scaleX(0.93);transform-origin:center">43</span></div>
<div class="t" style="left:1223px;top:723.5px;width:71px;height:44px;line-height:44px;text-align:center;font-size:12px;color:#222;"><span style="display:inline-block;transform:scaleX(0.93);transform-origin:center">43</span></div>
<div class="t" style="left:1294px;top:723.5px;width:70px;height:44px;line-height:44px;text-align:center;font-size:12px;color:#222;"><span style="display:inline-block;transform:scaleX(0.93);transform-origin:center">43</span></div>
<div class="t" style="left:943px;top:767.5px;width:70px;height:44px;line-height:44px;text-align:center;font-size:12px;color:#222;"><span style="display:inline-block;transform:scaleX(0.93);transform-origin:center">14 245</span></div>
<div class="t" style="left:1013px;top:767.5px;width:70px;height:44px;line-height:44px;text-align:center;font-size:12px;color:#222;"><span style="display:inline-block;transform:scaleX(0.93);transform-origin:center">14 245</span></div>
<div class="t" style="left:1083px;top:767.5px;width:70px;height:44px;line-height:44px;text-align:center;font-size:12px;color:#222;"><span style="display:inline-block;transform:scaleX(0.93);transform-origin:center">14 245</span></div>
<div class="t" style="left:1153px;top:767.5px;width:70px;height:44px;line-height:44px;text-align:center;font-size:12px;color:#222;"><span style="display:inline-block;transform:scaleX(0.93);transform-origin:center">14 245</span></div>
<div class="t" style="left:1223px;top:767.5px;width:71px;height:44px;line-height:44px;text-align:center;font-size:12px;color:#222;"><span style="display:inline-block;transform:scaleX(0.93);transform-origin:center">14 245</span></div>
<div class="t" style="left:1294px;top:767.5px;width:70px;height:44px;line-height:44px;text-align:center;font-size:12px;color:#222;"><span style="display:inline-block;transform:scaleX(0.93);transform-origin:center">14 245</span></div>
<div class="t" style="left:943px;top:811.5px;width:70px;height:44px;line-height:44px;text-align:center;font-size:12px;color:#222;font-weight:bold;color:#000">770</div>
<div class="t" style="left:1013px;top:811.5px;width:70px;height:44px;line-height:44px;text-align:center;font-size:12px;color:#222;font-weight:bold;color:#000">770</div>
<div class="t" style="left:1083px;top:811.5px;width:70px;height:44px;line-height:44px;text-align:center;font-size:12px;color:#222;font-weight:bold;color:#000">770</div>
<div class="t" style="left:1153px;top:811.5px;width:70px;height:44px;line-height:44px;text-align:center;font-size:12px;color:#222;font-weight:bold;color:#000">770</div>
<div class="t" style="left:1223px;top:811.5px;width:71px;height:44px;line-height:44px;text-align:center;font-size:12px;color:#222;font-weight:bold;color:#000">770</div>
<div class="t" style="left:1294px;top:811.5px;width:70px;height:44px;line-height:44px;text-align:center;font-size:12px;color:#222;font-weight:bold;color:#000">770</div>
<div class="t" style="left:1364px;top:811.5px;width:70px;height:44px;line-height:44px;text-align:center;font-size:12px;color:#222;color:#a8a8ad"><span style="display:inline-block;transform:scaleX(0.93);transform-origin:center">770</span></div>
<div class="t" style="left:1434px;top:811.5px;width:70px;height:44px;line-height:44px;text-align:center;font-size:12px;color:#222;color:#a8a8ad"><span style="display:inline-block;transform:scaleX(0.93);transform-origin:center">770</span></div>
<div class="t" style="left:1504px;top:811.5px;width:70px;height:44px;line-height:44px;text-align:center;font-size:12px;color:#222;color:#a8a8ad"><span style="display:inline-block;transform:scaleX(0.93);transform-origin:center">770</span></div>
<div class="t" style="left:1574px;top:811.5px;width:70px;height:44px;line-height:44px;text-align:center;font-size:12px;color:#222;color:#a8a8ad"><span style="display:inline-block;transform:scaleX(0.93);transform-origin:center">770</span></div>
<div class="t" style="left:1644px;top:811.5px;width:70px;height:44px;line-height:44px;text-align:center;font-size:12px;color:#222;color:#a8a8ad"><span style="display:inline-block;transform:scaleX(0.93);transform-origin:center">770</span></div>
<div class="t" style="left:1714px;top:811.5px;width:70px;height:44px;line-height:44px;text-align:center;font-size:12px;color:#222;color:#a8a8ad"><span style="display:inline-block;transform:scaleX(0.93);transform-origin:center">770</span></div>
<div class="t" style="left:1784px;top:811.5px;width:70px;height:44px;line-height:44px;text-align:center;font-size:12px;color:#222;color:#a8a8ad"><span style="display:inline-block;transform:scaleX(0.93);transform-origin:center">770</span></div>
<div class="t" style="left:1854px;top:811.5px;width:70px;height:44px;line-height:44px;text-align:center;font-size:12px;color:#222;color:#a8a8ad"><span style="display:inline-block;transform:scaleX(0.93);transform-origin:center">770</span></div>
<div style="left:43px;top:899px;width:1874px;height:9px;background:#f0f0f3"></div>
<div style="left:421px;top:900px;width:42px;height:7px;background:#dcdcdf;border-radius:4px"></div>
<div style="left:1914px;top:629px;width:3px;height:181px;background:#d8d8dc;border-radius:2px"></div>
<svg style="position:absolute;left:0;top:0" width="1917" height="908" viewBox="0 0 1917 908"><line x1="1503.8" y1="160" x2="1503.80" y2="95.80" stroke="#000" stroke-width="3"/><polygon points="1503.8,85.3 1509.60,96.80 1498.00,96.80" fill="#000"/><ellipse cx="1505.4" cy="170.5" rx="15.700000000000001" ry="17.6" fill="#fff" stroke="#000" stroke-width="2.8"/><text x="1505.7" y="177.7" text-anchor="middle" font-family="Liberation Sans" font-size="20" fill="#000">1</text><line x1="1548.4" y1="160" x2="1548.40" y2="95.80" stroke="#000" stroke-width="3"/><polygon points="1548.4,85.3 1554.20,96.80 1542.60,96.80" fill="#000"/><ellipse cx="1549.5" cy="170.5" rx="15.700000000000001" ry="17.6" fill="#fff" stroke="#000" stroke-width="2.8"/><text x="1549.8" y="177.7" text-anchor="middle" font-family="Liberation Sans" font-size="20" fill="#000">2</text><line x1="1592.4" y1="160" x2="1592.40" y2="95.80" stroke="#000" stroke-width="3"/><polygon points="1592.4,85.3 1598.20,96.80 1586.60,96.80" fill="#000"/><ellipse cx="1593.7" cy="170.5" rx="15.700000000000001" ry="17.6" fill="#fff" stroke="#000" stroke-width="2.8"/><text x="1594.0" y="177.7" text-anchor="middle" font-family="Liberation Sans" font-size="20" fill="#000">3</text><line x1="845" y1="124.8" x2="907.50" y2="124.80" stroke="#000" stroke-width="3"/><polygon points="918,124.8 906.50,130.60 906.50,119.00" fill="#000"/><ellipse cx="834.1" cy="124.9" rx="15.700000000000001" ry="17.6" fill="#fff" stroke="#000" stroke-width="2.8"/><text x="834.4" y="132.1" text-anchor="middle" font-family="Liberation Sans" font-size="20" fill="#000">4</text><line x1="1452.6" y1="495" x2="1452.60" y2="579.00" stroke="#000" stroke-width="3"/><polygon points="1452.6,589.5 1446.80,578.00 1458.40,578.00" fill="#000"/><ellipse cx="1453.1" cy="489.2" rx="15.299999999999999" ry="17.35" fill="#fff" stroke="#000" stroke-width="2.8"/><text x="1453.3999999999999" y="496.4" text-anchor="middle" font-family="Liberation Sans" font-size="20" fill="#000">1</text><line x1="1497.3" y1="495" x2="1497.30" y2="579.00" stroke="#000" stroke-width="3"/><polygon points="1497.3,589.5 1491.50,578.00 1503.10,578.00" fill="#000"/><ellipse cx="1497.5" cy="489.2" rx="15.299999999999999" ry="17.35" fill="#fff" stroke="#000" stroke-width="2.8"/><text x="1497.8" y="496.4" text-anchor="middle" font-family="Liberation Sans" font-size="20" fill="#000">2</text><line x1="1539.5" y1="495" x2="1539.50" y2="579.00" stroke="#000" stroke-width="3"/><polygon points="1539.5,589.5 1533.70,578.00 1545.30,578.00" fill="#000"/><ellipse cx="1539.4" cy="489.2" rx="15.299999999999999" ry="17.35" fill="#fff" stroke="#000" stroke-width="2.8"/><text x="1539.7" y="496.4" text-anchor="middle" font-family="Liberation Sans" font-size="20" fill="#000">3</text><line x1="875" y1="666.6" x2="940.20" y2="666.60" stroke="#000" stroke-width="3"/><polygon points="950.7,666.6 939.20,672.40 939.20,660.80" fill="#000"/><ellipse cx="867.1" cy="666" rx="15.299999999999999" ry="17.35" fill="#fff" stroke="#000" stroke-width="2.8"/><text x="867.4" y="673.2" text-anchor="middle" font-family="Liberation Sans" font-size="20" fill="#000">4</text></svg>
</body></html>
